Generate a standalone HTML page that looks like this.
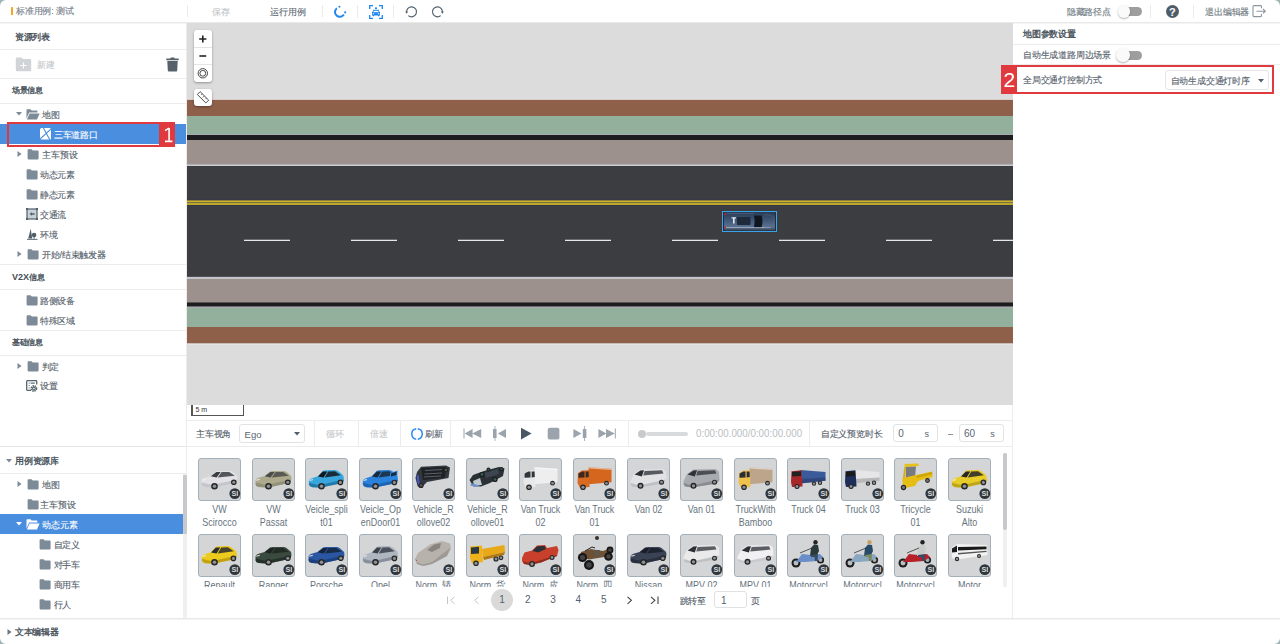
<!DOCTYPE html>
<html><head><meta charset="utf-8"><style>
html,body{margin:0;padding:0}
body{width:1280px;height:644px;position:relative;overflow:hidden;background:#fff;font-family:"Liberation Sans",sans-serif}
.t{position:absolute;white-space:nowrap;line-height:12px;font-size:9px}
</style></head><body>
<div style="position:absolute;left:0px;top:22px;width:1280px;height:1px;background:#e9e9e9"></div>
<div style="position:absolute;left:0px;top:23px;width:1280px;height:1px;background:#f4f4f4"></div>
<div style="position:absolute;left:186px;top:23px;width:1px;height:595px;background:#ececec"></div>
<div style="position:absolute;left:11px;top:7px;width:2.2px;height:8.3px;background:#f6a623;border-radius:0.5px"></div>
<div class="t" style="left:16.00px;top:5.1px;color:#75808a;font-size:9px;font-weight:normal;letter-spacing:-0.2px;-webkit-text-stroke:0.12px #75808a;">标准用例: 测试</div>
<div style="position:absolute;left:187px;top:5px;width:1px;height:12px;background:#ebebeb"></div>
<div class="t" style="left:212.30px;top:6.0px;color:#c4c6c8;font-size:9px;font-weight:normal;letter-spacing:-0.2px;-webkit-text-stroke:0.12px #c4c6c8;">保存</div>
<div class="t" style="left:270.30px;top:6.0px;color:#5e6973;font-size:9px;font-weight:normal;letter-spacing:-0.2px;-webkit-text-stroke:0.12px #5e6973;">运行用例</div>
<div style="position:absolute;left:322px;top:5px;width:1px;height:12px;background:#ebebeb"></div>
<svg style="position:absolute;left:332px;top:4px" width="16" height="16" viewBox="0 0 16 16">
<path d="M4.9 4.2 A4.8 4.8 0 1 0 11.9 10.5" fill="none" stroke="#1f87ef" stroke-width="2"/>
<circle cx="7.4" cy="2.7" r="1.05" fill="#1f87ef"/><circle cx="13.2" cy="8.4" r="1.05" fill="#1f87ef"/></svg>
<div style="position:absolute;left:357px;top:5px;width:1px;height:13px;background:#ebebeb"></div>
<svg style="position:absolute;left:368.5px;top:4.5px" width="14" height="14" viewBox="0 0 14 14">
<path d="M0.7 4 V0.7 H4 M10 0.7 H13.3 V4 M13.3 10 V13.3 H10 M4 13.3 H0.7 V10" fill="none" stroke="#1f87ef" stroke-width="1.3"/>
<path d="M4.3 4.8 H9.7 L10.5 7 H11 V10.4 H10.2 V11.3 H8.9 V10.4 H5.1 V11.3 H3.8 V10.4 H3 V7 H3.5 Z" fill="#1f87ef"/>
<rect x="4.6" y="5.8" width="4.8" height="1.4" fill="#fff"/><rect x="3.8" y="8.2" width="1.3" height="1" fill="#fff"/><rect x="8.9" y="8.2" width="1.3" height="1" fill="#fff"/>
<path d="M6.3 2.3 H7.7 L8.1 4 H5.9 Z" fill="#1f87ef"/></svg>
<div style="position:absolute;left:393px;top:5px;width:1px;height:13px;background:#ebebeb"></div>
<svg style="position:absolute;left:404px;top:4px" width="15" height="15" viewBox="0 0 15 15">
<path d="M2.6 8.6 A5 5 0 1 1 4.3 11.6" fill="none" stroke="#50606c" stroke-width="1.2"/>
<path d="M1.2 7.4 L4 7.4 L2.6 9.8 Z" fill="#50606c"/></svg>
<svg style="position:absolute;left:430px;top:4px" width="15" height="15" viewBox="0 0 15 15">
<path d="M12.4 8.6 A5 5 0 1 0 10.7 11.6" fill="none" stroke="#50606c" stroke-width="1.2"/>
<path d="M13.8 7.4 L11 7.4 L12.4 9.8 Z" fill="#50606c"/></svg>
<div class="t" style="left:1066.80px;top:6.0px;color:#6d7880;font-size:9px;font-weight:normal;letter-spacing:-0.2px;-webkit-text-stroke:0.12px #6d7880;">隐藏路径点</div>
<div style="position:absolute;left:1119px;top:7px;width:23px;height:9px;background:#9e9e9e;border-radius:5px"></div>
<div style="position:absolute;left:1117.5px;top:5.3px;width:12.5px;height:12.5px;background:#fafafa;border-radius:50%;box-shadow:0 1px 2px rgba(0,0,0,.3)"></div>
<div style="position:absolute;left:1150px;top:5px;width:1px;height:13px;background:#ebebeb"></div>
<div style="position:absolute;left:1165.5px;top:4.5px;width:13.5px;height:13.5px;border-radius:50%;background:#4e5d6a;color:#fff;font:bold 11px/14px 'Liberation Sans',sans-serif;text-align:center">?</div>
<div style="position:absolute;left:1193px;top:5px;width:1px;height:13px;background:#ebebeb"></div>
<div class="t" style="left:1205.30px;top:6.0px;color:#6d7880;font-size:9px;font-weight:normal;letter-spacing:-0.2px;-webkit-text-stroke:0.12px #6d7880;">退出编辑器</div>
<svg style="position:absolute;left:1252px;top:5px" width="15" height="13" viewBox="0 0 15 13">
<path d="M9.5 3.2 V1.5 A1 1 0 0 0 8.5 0.6 H2 A1 1 0 0 0 1 1.6 V10.6 A1 1 0 0 0 2 11.6 H8.5 A1 1 0 0 0 9.5 10.6 V9" fill="none" stroke="#8a96a0" stroke-width="1.1"/>
<path d="M4.5 6.2 H13.2 M11 4 L13.3 6.2 L11 8.4" fill="none" stroke="#8a96a0" stroke-width="1.1"/></svg>
<div class="t" style="left:14.80px;top:31.0px;color:#454f58;font-size:9px;font-weight:normal;letter-spacing:-0.2px;-webkit-text-stroke:0.32px #454f58;">资源列表</div>
<div style="position:absolute;left:0px;top:49px;width:186px;height:1px;background:#ececec"></div>
<svg style="position:absolute;left:15px;top:57px" width="17" height="15" viewBox="0 0 17 15">
<path d="M1.5 0.5 H6.5 L8 2 H15 A1.2 1.2 0 0 1 16.2 3.2 V13 A1.2 1.2 0 0 1 15 14.2 H2 A1.2 1.2 0 0 1 0.8 13 V1.2 Z" fill="#d0d4d7"/>
<path d="M8.5 5.5 V11.5 M5.5 8.5 H11.5" stroke="#fff" stroke-width="1"/></svg>
<div class="t" style="left:36.90px;top:58.900000000000006px;color:#c4c8cb;font-size:9px;font-weight:normal;letter-spacing:-0.2px;-webkit-text-stroke:0.12px #c4c8cb;">新建</div>
<svg style="position:absolute;left:166px;top:57px" width="13" height="15" viewBox="0 0 13 15">
<path d="M0.3 1.6 H4.2 L4.8 0.4 H8.2 L8.8 1.6 H12.7 V3.2 H0.3 Z" fill="#56626b"/>
<path d="M1.3 4 H11.7 L11.2 13.6 A1 1 0 0 1 10.2 14.5 H2.8 A1 1 0 0 1 1.8 13.6 Z" fill="#56626b"/></svg>
<div style="position:absolute;left:0px;top:78px;width:186px;height:1px;background:#ececec"></div>
<div class="t" style="left:11.90px;top:85.3px;color:#454f58;font-size:8px;font-weight:normal;letter-spacing:-0.2px;-webkit-text-stroke:0.32px #454f58;">场景信息</div>
<div style="position:absolute;left:0px;top:103px;width:186px;height:1px;background:#ececec"></div>
<svg style="position:absolute;left:15.8px;top:111.5px" width="6" height="4" viewBox="0 0 6 4"><path d="M0 0 L6 0 L3 3.6Z" fill="#7c8b97"/></svg>
<svg style="position:absolute;left:26px;top:108.5px" width="14" height="11" viewBox="0 0 14 11">
<path d="M0.5 1 A0.8 0.8 0 0 1 1.3 0.2 H4.5 L5.6 1.4 H10.6 A0.8 0.8 0 0 1 11.4 2.2 V3.6 H3.2 L0.5 9.5 Z" fill="#7c8b97"/>
<path d="M3.6 4.4 H13.6 L11 10.4 H0.9 Z" fill="#7c8b97"/></svg>
<div class="t" style="left:41.90px;top:108.7px;color:#55616b;font-size:9px;font-weight:normal;letter-spacing:-0.2px;-webkit-text-stroke:0.12px #55616b;">地图</div>
<div style="position:absolute;left:0px;top:123.5px;width:186px;height:20.5px;background:#4a8ee0"></div>
<svg style="position:absolute;left:39.8px;top:128px" width="11.5" height="11.5" viewBox="0 0 11.5 11.5">
<rect x="0" y="0" width="11.3" height="11.4" rx="1.6" fill="#fff"/>
<path d="M3.2 -0.5 L9.9 12 M11.4 0.6 L0.2 10.8" stroke="#4a8ee0" stroke-width="1.1"/></svg>
<div class="t" style="left:53.90px;top:128.7px;color:#ffffff;font-size:9px;font-weight:normal;letter-spacing:-0.2px;-webkit-text-stroke:0.12px #ffffff;">三车道路口</div>
<div style="position:absolute;left:7px;top:122px;width:167.5px;height:24.5px;border:2px solid #e0393e;box-sizing:border-box"></div>
<div style="position:absolute;left:158.5px;top:122px;width:16px;height:24.5px;background:#e0393e"></div>
<svg style="position:absolute;left:158.5px;top:122px" width="16" height="25" viewBox="0 0 16 25"><path d="M10.1 6 V19.3 M6 8.6 L10.1 6.1 M6 19.4 H13.4" fill="none" stroke="#fff" stroke-width="1.6"/></svg>
<svg style="position:absolute;left:16.5px;top:151px" width="5" height="6" viewBox="0 0 5 6"><path d="M0.5 0 L4.5 3 L0.5 6Z" fill="#7c8b97"/></svg>
<svg style="position:absolute;left:27px;top:149px" width="12" height="11" viewBox="0 0 12 11">
<path d="M0.6 1 A0.8 0.8 0 0 1 1.4 0.2 H4.6 L5.8 1.6 H10.8 A0.8 0.8 0 0 1 11.6 2.4 V9.6 A0.8 0.8 0 0 1 10.8 10.4 H1.4 A0.8 0.8 0 0 1 0.6 9.6 Z" fill="#7c8b97"/></svg>
<div class="t" style="left:42.20px;top:148.7px;color:#55616b;font-size:9px;font-weight:normal;letter-spacing:-0.2px;-webkit-text-stroke:0.12px #55616b;">主车预设</div>
<svg style="position:absolute;left:26px;top:169px" width="12" height="11" viewBox="0 0 12 11">
<path d="M0.6 1 A0.8 0.8 0 0 1 1.4 0.2 H4.6 L5.8 1.6 H10.8 A0.8 0.8 0 0 1 11.6 2.4 V9.6 A0.8 0.8 0 0 1 10.8 10.4 H1.4 A0.8 0.8 0 0 1 0.6 9.6 Z" fill="#7c8b97"/></svg>
<div class="t" style="left:39.90px;top:168.7px;color:#55616b;font-size:9px;font-weight:normal;letter-spacing:-0.2px;-webkit-text-stroke:0.12px #55616b;">动态元素</div>
<svg style="position:absolute;left:26px;top:189px" width="12" height="11" viewBox="0 0 12 11">
<path d="M0.6 1 A0.8 0.8 0 0 1 1.4 0.2 H4.6 L5.8 1.6 H10.8 A0.8 0.8 0 0 1 11.6 2.4 V9.6 A0.8 0.8 0 0 1 10.8 10.4 H1.4 A0.8 0.8 0 0 1 0.6 9.6 Z" fill="#7c8b97"/></svg>
<div class="t" style="left:39.90px;top:188.7px;color:#55616b;font-size:9px;font-weight:normal;letter-spacing:-0.2px;-webkit-text-stroke:0.12px #55616b;">静态元素</div>
<svg style="position:absolute;left:26px;top:208px" width="12" height="12" viewBox="0 0 12 12">
<rect x="1" y="1" width="10" height="10" fill="#c9d1d7" stroke="#4f5f6b" stroke-width="1.2"/>
<rect x="0" y="0" width="2" height="2" fill="#4f5f6b"/><rect x="10" y="0" width="2" height="2" fill="#4f5f6b"/><rect x="0" y="10" width="2" height="2" fill="#4f5f6b"/><rect x="10" y="10" width="2" height="2" fill="#4f5f6b"/>
<path d="M3.5 6 L6 4.2 V5.3 H8.6 V6.7 H6 V7.8 Z" fill="#4f5f6b"/></svg>
<div class="t" style="left:39.90px;top:208.7px;color:#55616b;font-size:9px;font-weight:normal;letter-spacing:-0.2px;-webkit-text-stroke:0.12px #55616b;">交通流</div>
<svg style="position:absolute;left:26px;top:228px" width="12" height="12" viewBox="0 0 12 12">
<path d="M4.7 0.8 L6.3 10.6 H2.2 Z" fill="#4f5f6b"/><circle cx="8.1" cy="7" r="2.3" fill="#4f5f6b"/>
<path d="M8.1 8 V10.8" stroke="#4f5f6b" stroke-width="1"/><path d="M1 11.4 H11.5" stroke="#4f5f6b" stroke-width="0.9"/></svg>
<div class="t" style="left:39.90px;top:228.7px;color:#55616b;font-size:9px;font-weight:normal;letter-spacing:-0.2px;-webkit-text-stroke:0.12px #55616b;">环境</div>
<svg style="position:absolute;left:16.5px;top:251px" width="5" height="6" viewBox="0 0 5 6"><path d="M0.5 0 L4.5 3 L0.5 6Z" fill="#7c8b97"/></svg>
<svg style="position:absolute;left:27px;top:249px" width="12" height="11" viewBox="0 0 12 11">
<path d="M0.6 1 A0.8 0.8 0 0 1 1.4 0.2 H4.6 L5.8 1.6 H10.8 A0.8 0.8 0 0 1 11.6 2.4 V9.6 A0.8 0.8 0 0 1 10.8 10.4 H1.4 A0.8 0.8 0 0 1 0.6 9.6 Z" fill="#7c8b97"/></svg>
<div class="t" style="left:41.90px;top:248.7px;color:#55616b;font-size:9px;font-weight:normal;letter-spacing:-0.2px;-webkit-text-stroke:0.12px #55616b;">开始/结束触发器</div>
<div style="position:absolute;left:0px;top:263.5px;width:186px;height:1px;background:#ececec"></div>
<div class="t" style="left:11.90px;top:271.2px;color:#454f58;font-size:8px;font-weight:normal;letter-spacing:-0.2px;-webkit-text-stroke:0.32px #454f58;"><span style="font-size:9px;letter-spacing:0;font-weight:bold;-webkit-text-stroke:0">V2X</span>信息</div>
<div style="position:absolute;left:0px;top:289px;width:186px;height:1px;background:#ececec"></div>
<svg style="position:absolute;left:26px;top:295px" width="12" height="11" viewBox="0 0 12 11">
<path d="M0.6 1 A0.8 0.8 0 0 1 1.4 0.2 H4.6 L5.8 1.6 H10.8 A0.8 0.8 0 0 1 11.6 2.4 V9.6 A0.8 0.8 0 0 1 10.8 10.4 H1.4 A0.8 0.8 0 0 1 0.6 9.6 Z" fill="#7c8b97"/></svg>
<div class="t" style="left:39.90px;top:294.7px;color:#55616b;font-size:9px;font-weight:normal;letter-spacing:-0.2px;-webkit-text-stroke:0.12px #55616b;">路侧设备</div>
<svg style="position:absolute;left:26px;top:315px" width="12" height="11" viewBox="0 0 12 11">
<path d="M0.6 1 A0.8 0.8 0 0 1 1.4 0.2 H4.6 L5.8 1.6 H10.8 A0.8 0.8 0 0 1 11.6 2.4 V9.6 A0.8 0.8 0 0 1 10.8 10.4 H1.4 A0.8 0.8 0 0 1 0.6 9.6 Z" fill="#7c8b97"/></svg>
<div class="t" style="left:39.90px;top:314.7px;color:#55616b;font-size:9px;font-weight:normal;letter-spacing:-0.2px;-webkit-text-stroke:0.12px #55616b;">特殊区域</div>
<div style="position:absolute;left:0px;top:330px;width:186px;height:1px;background:#ececec"></div>
<div class="t" style="left:11.90px;top:336.8px;color:#454f58;font-size:8px;font-weight:normal;letter-spacing:-0.2px;-webkit-text-stroke:0.32px #454f58;">基础信息</div>
<div style="position:absolute;left:0px;top:355px;width:186px;height:1px;background:#ececec"></div>
<svg style="position:absolute;left:17px;top:363px" width="5" height="6" viewBox="0 0 5 6"><path d="M0.5 0 L4.5 3 L0.5 6Z" fill="#7c8b97"/></svg>
<svg style="position:absolute;left:27px;top:361px" width="12" height="11" viewBox="0 0 12 11">
<path d="M0.6 1 A0.8 0.8 0 0 1 1.4 0.2 H4.6 L5.8 1.6 H10.8 A0.8 0.8 0 0 1 11.6 2.4 V9.6 A0.8 0.8 0 0 1 10.8 10.4 H1.4 A0.8 0.8 0 0 1 0.6 9.6 Z" fill="#7c8b97"/></svg>
<div class="t" style="left:41.60px;top:360.7px;color:#55616b;font-size:9px;font-weight:normal;letter-spacing:-0.2px;-webkit-text-stroke:0.12px #55616b;">判定</div>
<svg style="position:absolute;left:26px;top:379.5px" width="12" height="12" viewBox="0 0 12 12">
<path d="M5 10.3 H1.3 A0.6 0.6 0 0 1 0.7 9.7 V1.3 A0.6 0.6 0 0 1 1.3 0.7 H10.1 A0.6 0.6 0 0 1 10.7 1.3 V4.5" fill="none" stroke="#56666f" stroke-width="1.3"/>
<rect x="2.7" y="2.6" width="1" height="1" fill="#56666f"/><rect x="2.7" y="5" width="1" height="1" fill="#56666f"/><rect x="2.7" y="7.4" width="1" height="1" fill="#56666f"/>
<rect x="4.6" y="2.5" width="4.2" height="1.2" fill="#56666f"/>
<circle cx="7.9" cy="8.5" r="2.6" fill="none" stroke="#56666f" stroke-width="1.6" stroke-dasharray="1.4 0.7"/><circle cx="7.9" cy="8.5" r="1.9" fill="#56666f"/><circle cx="7.9" cy="8.5" r="0.8" fill="#fff"/></svg>
<div class="t" style="left:40.10px;top:380.2px;color:#55616b;font-size:9px;font-weight:normal;letter-spacing:-0.2px;-webkit-text-stroke:0.12px #55616b;">设置</div>
<div style="position:absolute;left:0px;top:446px;width:186px;height:1px;background:#e6e6e6"></div>
<svg style="position:absolute;left:6px;top:458.5px" width="6" height="4" viewBox="0 0 6 4"><path d="M0 0 L6 0 L3 3.6Z" fill="#7c8b97"/></svg>
<div class="t" style="left:15.00px;top:455.2px;color:#454f58;font-size:9px;font-weight:normal;letter-spacing:-0.2px;-webkit-text-stroke:0.32px #454f58;">用例资源库</div>
<div style="position:absolute;left:0px;top:473px;width:186px;height:1px;background:#ececec"></div>
<div style="position:absolute;left:182.8px;top:474px;width:3.8px;height:144px;background:#efefef"></div>
<div style="position:absolute;left:182.8px;top:474.5px;width:3.8px;height:59.5px;background:#c8c9ca;border-radius:1px"></div>
<svg style="position:absolute;left:16.6px;top:481px" width="5" height="6" viewBox="0 0 5 6"><path d="M0.5 0 L4.5 3 L0.5 6Z" fill="#7c8b97"/></svg>
<svg style="position:absolute;left:27px;top:479px" width="12" height="11" viewBox="0 0 12 11">
<path d="M0.6 1 A0.8 0.8 0 0 1 1.4 0.2 H4.6 L5.8 1.6 H10.8 A0.8 0.8 0 0 1 11.6 2.4 V9.6 A0.8 0.8 0 0 1 10.8 10.4 H1.4 A0.8 0.8 0 0 1 0.6 9.6 Z" fill="#7c8b97"/></svg>
<div class="t" style="left:42.30px;top:478.9px;color:#55616b;font-size:9px;font-weight:normal;letter-spacing:-0.2px;-webkit-text-stroke:0.12px #55616b;">地图</div>
<svg style="position:absolute;left:26.5px;top:499px" width="12" height="11" viewBox="0 0 12 11">
<path d="M0.6 1 A0.8 0.8 0 0 1 1.4 0.2 H4.6 L5.8 1.6 H10.8 A0.8 0.8 0 0 1 11.6 2.4 V9.6 A0.8 0.8 0 0 1 10.8 10.4 H1.4 A0.8 0.8 0 0 1 0.6 9.6 Z" fill="#7c8b97"/></svg>
<div class="t" style="left:40.40px;top:498.9px;color:#55616b;font-size:9px;font-weight:normal;letter-spacing:-0.2px;-webkit-text-stroke:0.12px #55616b;">主车预设</div>
<div style="position:absolute;left:0px;top:514px;width:182.5px;height:20px;background:#4a8ee0"></div>
<svg style="position:absolute;left:15.7px;top:522px" width="6" height="4" viewBox="0 0 6 4"><path d="M0 0 L6 0 L3 3.6Z" fill="#fff"/></svg>
<svg style="position:absolute;left:26px;top:519px" width="14" height="11" viewBox="0 0 14 11">
<path d="M0.5 1 A0.8 0.8 0 0 1 1.3 0.2 H4.5 L5.6 1.4 H10.6 A0.8 0.8 0 0 1 11.4 2.2 V3.6 H3.2 L0.5 9.5 Z" fill="#fff"/>
<path d="M3.6 4.4 H13.6 L11 10.4 H0.9 Z" fill="#fff"/></svg>
<div class="t" style="left:42.30px;top:518.9px;color:#fff;font-size:9px;font-weight:normal;letter-spacing:-0.2px;-webkit-text-stroke:0.12px #fff;">动态元素</div>
<svg style="position:absolute;left:39.3px;top:538.7px" width="12" height="11" viewBox="0 0 12 11">
<path d="M0.6 1 A0.8 0.8 0 0 1 1.4 0.2 H4.6 L5.8 1.6 H10.8 A0.8 0.8 0 0 1 11.6 2.4 V9.6 A0.8 0.8 0 0 1 10.8 10.4 H1.4 A0.8 0.8 0 0 1 0.6 9.6 Z" fill="#7c8b97"/></svg>
<div class="t" style="left:53.60px;top:539.2px;color:#55616b;font-size:9px;font-weight:normal;letter-spacing:-0.2px;-webkit-text-stroke:0.12px #55616b;">自定义</div>
<svg style="position:absolute;left:39.3px;top:558.7px" width="12" height="11" viewBox="0 0 12 11">
<path d="M0.6 1 A0.8 0.8 0 0 1 1.4 0.2 H4.6 L5.8 1.6 H10.8 A0.8 0.8 0 0 1 11.6 2.4 V9.6 A0.8 0.8 0 0 1 10.8 10.4 H1.4 A0.8 0.8 0 0 1 0.6 9.6 Z" fill="#7c8b97"/></svg>
<div class="t" style="left:53.60px;top:559.2px;color:#55616b;font-size:9px;font-weight:normal;letter-spacing:-0.2px;-webkit-text-stroke:0.12px #55616b;">对手车</div>
<svg style="position:absolute;left:39.3px;top:578.7px" width="12" height="11" viewBox="0 0 12 11">
<path d="M0.6 1 A0.8 0.8 0 0 1 1.4 0.2 H4.6 L5.8 1.6 H10.8 A0.8 0.8 0 0 1 11.6 2.4 V9.6 A0.8 0.8 0 0 1 10.8 10.4 H1.4 A0.8 0.8 0 0 1 0.6 9.6 Z" fill="#7c8b97"/></svg>
<div class="t" style="left:53.60px;top:579.2px;color:#55616b;font-size:9px;font-weight:normal;letter-spacing:-0.2px;-webkit-text-stroke:0.12px #55616b;">商用车</div>
<svg style="position:absolute;left:39.3px;top:598.7px" width="12" height="11" viewBox="0 0 12 11">
<path d="M0.6 1 A0.8 0.8 0 0 1 1.4 0.2 H4.6 L5.8 1.6 H10.8 A0.8 0.8 0 0 1 11.6 2.4 V9.6 A0.8 0.8 0 0 1 10.8 10.4 H1.4 A0.8 0.8 0 0 1 0.6 9.6 Z" fill="#7c8b97"/></svg>
<div class="t" style="left:53.60px;top:599.2px;color:#55616b;font-size:9px;font-weight:normal;letter-spacing:-0.2px;-webkit-text-stroke:0.12px #55616b;">行人</div>
<div style="position:absolute;left:0px;top:618px;width:1280px;height:1px;background:#e8e8e8"></div>
<div style="position:absolute;left:0px;top:619px;width:1280px;height:1px;background:#f4f4f4"></div>
<svg style="position:absolute;left:6.7px;top:628.8px" width="5" height="6" viewBox="0 0 5 6"><path d="M0.5 0 L4.5 3 L0.5 6Z" fill="#6a7680"/></svg>
<div class="t" style="left:14.90px;top:626.0px;color:#454f58;font-size:9px;font-weight:normal;letter-spacing:-0.2px;-webkit-text-stroke:0.32px #454f58;">文本编辑器</div>
<div style="position:absolute;left:187px;top:23px;width:825.7px;height:382px;background:#dcdcdc;overflow:hidden">
<div style="position:absolute;left:0;top:76px;width:826px;height:1px;background:#d8cfcb"></div>
<div style="position:absolute;left:0;top:77px;width:826px;height:16px;background:#8e604a"></div>
<div style="position:absolute;left:0;top:93px;width:826px;height:18px;background:#93b09c"></div>
<div style="position:absolute;left:0;top:111px;width:826px;height:1px;background:#a8acb0"></div>
<div style="position:absolute;left:0;top:112px;width:826px;height:5px;background:#1d1d1f"></div>
<div style="position:absolute;left:0;top:117px;width:826px;height:24px;background:#9c918c"></div>
<div style="position:absolute;left:0;top:141px;width:826px;height:1px;background:#b3b0b2"></div>
<div style="position:absolute;left:0;top:142px;width:826px;height:1px;background:#c9ccd2"></div>
<div style="position:absolute;left:0;top:143px;width:826px;height:111px;background:#3c3d41"></div>
<div style="position:absolute;left:0;top:176px;width:826px;height:1px;background:#363a48"></div>
<div style="position:absolute;left:0;top:177px;width:826px;height:1px;background:#8a7e3a"></div>
<div style="position:absolute;left:0;top:178px;width:826px;height:1px;background:#d2b524"></div>
<div style="position:absolute;left:0;top:179px;width:826px;height:1px;background:#77703f"></div>
<div style="position:absolute;left:0;top:180px;width:826px;height:2px;background:#bda82c"></div>
<div style="position:absolute;left:0;top:182px;width:826px;height:1px;background:#343848"></div>
<div style="position:absolute;left:0;top:253px;width:826px;height:1px;background:#505258"></div>
<div style="position:absolute;left:0;top:254px;width:826px;height:2px;background:#c3c5cb"></div>
<div style="position:absolute;left:0;top:256px;width:826px;height:23px;background:#9c918c"></div>
<div style="position:absolute;left:0;top:279px;width:826px;height:1px;background:#5a5453"></div>
<div style="position:absolute;left:0;top:280px;width:826px;height:3px;background:#1d1d1f"></div>
<div style="position:absolute;left:0;top:283px;width:826px;height:1px;background:#6a6c70"></div>
<div style="position:absolute;left:0;top:284px;width:826px;height:1px;background:#a8acb0"></div>
<div style="position:absolute;left:0;top:285px;width:826px;height:19px;background:#93b09c"></div>
<div style="position:absolute;left:0;top:304px;width:826px;height:16px;background:#8e604a"></div>
<div style="position:absolute;left:0;top:320px;width:826px;height:1px;background:#c8bcb6"></div>
<div style="position:absolute;left:0;top:321px;width:826px;height:1px;background:#e4e4e6"></div>
<div style="position:absolute;left:56.5px;top:217px;width:46.5px;height:1px;background:#e2e5e9"></div><div style="position:absolute;left:56.5px;top:216px;width:46.5px;height:1px;background:#6a6c72"></div>
<div style="position:absolute;left:163.5px;top:217px;width:46.5px;height:1px;background:#e2e5e9"></div><div style="position:absolute;left:163.5px;top:216px;width:46.5px;height:1px;background:#6a6c72"></div>
<div style="position:absolute;left:270.5px;top:217px;width:46.5px;height:1px;background:#e2e5e9"></div><div style="position:absolute;left:270.5px;top:216px;width:46.5px;height:1px;background:#6a6c72"></div>
<div style="position:absolute;left:377.5px;top:217px;width:46.5px;height:1px;background:#e2e5e9"></div><div style="position:absolute;left:377.5px;top:216px;width:46.5px;height:1px;background:#6a6c72"></div>
<div style="position:absolute;left:484.5px;top:217px;width:46.5px;height:1px;background:#e2e5e9"></div><div style="position:absolute;left:484.5px;top:216px;width:46.5px;height:1px;background:#6a6c72"></div>
<div style="position:absolute;left:591.5px;top:217px;width:46.5px;height:1px;background:#e2e5e9"></div><div style="position:absolute;left:591.5px;top:216px;width:46.5px;height:1px;background:#6a6c72"></div>
<div style="position:absolute;left:698.5px;top:217px;width:46.5px;height:1px;background:#e2e5e9"></div><div style="position:absolute;left:698.5px;top:216px;width:46.5px;height:1px;background:#6a6c72"></div>
<div style="position:absolute;left:805.5px;top:217px;width:46.5px;height:1px;background:#e2e5e9"></div><div style="position:absolute;left:805.5px;top:216px;width:46.5px;height:1px;background:#6a6c72"></div>
<div style="position:absolute;left:535.3px;top:187.8px;width:54.5px;height:21.5px;box-sizing:border-box;border:1.6px solid #3aa4ea;background:#232c38"></div>
<svg style="position:absolute;left:537px;top:189.4px" width="51" height="18.4" viewBox="0 0 51 18.4">
<defs><linearGradient id="cg" x1="0" y1="0" x2="0" y2="1"><stop offset="0" stop-color="#2a3a52"/><stop offset="0.35" stop-color="#3a5070"/><stop offset="0.8" stop-color="#5a7090"/><stop offset="1" stop-color="#3a4658"/></linearGradient></defs>
<rect x="0" y="0" width="51" height="18.4" rx="1.5" fill="url(#cg)"/>
<rect x="13" y="5" width="13.5" height="8" rx="0.6" fill="#1f2a3a"/>
<path d="M30 3.5 L37.5 3.5 Q39.5 9 37.5 15.5 L30 15.5 Q31.5 9.5 30 3.5 Z" fill="#0f1620"/>
<path d="M2 15.6 H47" stroke="#b8c4d0" stroke-width="0.9" opacity="0.8"/><path d="M3 1.6 H30" stroke="#8090a4" stroke-width="0.7" opacity="0.5"/>
<path d="M40 2.5 Q48 2.5 50 6 L50 13 Q48 16 40 16" fill="none" stroke="#5a6e88" stroke-width="0.8" opacity="0.6"/>
<path d="M7.6 5.2 H12 V6.6 H10.6 V11.4 H9 V6.6 H7.6 Z" fill="#e6ebf0"/>
<rect x="0.3" y="1.3" width="1.6" height="1.8" fill="#d02626"/><rect x="0.3" y="14.6" width="1.6" height="1.8" fill="#d02626"/></svg>
<div style="position:absolute;left:7px;top:7px;width:17.5px;height:52px;background:#fff;border-radius:3px;box-shadow:0 1px 2.5px rgba(0,0,0,.35)"></div>
<div style="position:absolute;left:7px;top:24.299999999999997px;width:17.5px;height:1px;background:#e4e4e4"></div>
<div style="position:absolute;left:7px;top:41px;width:17.5px;height:1px;background:#e4e4e4"></div>
<svg style="position:absolute;left:7px;top:7px" width="18" height="52" viewBox="0 0 18 52">
<path d="M5.2 9 H12.4 M8.8 5.4 V12.6" stroke="#222" stroke-width="1.6"/>
<path d="M5.4 26 H12.2" stroke="#222" stroke-width="1.6"/>
<circle cx="8.8" cy="43.3" r="4.7" fill="none" stroke="#333" stroke-width="0.9"/>
<circle cx="8.8" cy="43.3" r="2.9" fill="none" stroke="#333" stroke-width="0.9"/></svg>
<div style="position:absolute;left:7px;top:66px;width:17.5px;height:16.5px;background:#fff;border-radius:3px;box-shadow:0 1px 2.5px rgba(0,0,0,.35)"></div>
<svg style="position:absolute;left:7px;top:66px" width="18" height="17" viewBox="0 0 18 17">
<g transform="rotate(45 9 8.3)"><rect x="3" y="6.3" width="12" height="4" fill="none" stroke="#444" stroke-width="0.9"/>
<path d="M6 6.3 V8 M9 6.3 V8.5 M12 6.3 V8" stroke="#444" stroke-width="0.7"/></g></svg>
</div>
<div style="position:absolute;left:187px;top:405px;width:825px;height:15px;background:#fff"></div>
<div style="position:absolute;left:191.3px;top:405px;width:1.3px;height:11px;background:#555"></div>
<div style="position:absolute;left:243px;top:405px;width:1.3px;height:11px;background:#555"></div>
<div style="position:absolute;left:191.3px;top:415px;width:53px;height:1.3px;background:#555"></div>
<div class="t" style="left:195.5px;top:405px;font-size:7px;line-height:10px;color:#333">5 m</div>
<div style="position:absolute;left:187px;top:420px;width:825px;height:1px;background:#ececec"></div>
<div style="position:absolute;left:187px;top:446px;width:825px;height:1px;background:#ececec"></div>
<div class="t" style="left:196.10px;top:427.5px;color:#55616b;font-size:9px;font-weight:normal;letter-spacing:-0.2px;-webkit-text-stroke:0.12px #55616b;">主车视角</div>
<div style="position:absolute;left:238.5px;top:424.4px;width:66.3px;height:18.2px;border:1px solid #e1e3e5;border-radius:3px;box-sizing:border-box;background:#fff"></div>
<div class="t" style="left:244.6px;top:428.6px;font-size:9.5px;line-height:12px;color:#5b6670">Ego</div>
<svg style="position:absolute;left:293.5px;top:431.8px" width="6" height="4" viewBox="0 0 6 4"><path d="M0 0 L6 0 L3 3.6Z" fill="#555f68"/></svg>
<div style="position:absolute;left:313.5px;top:420px;width:1px;height:26px;background:#ececec"></div>
<div style="position:absolute;left:357.5px;top:420px;width:1px;height:26px;background:#ececec"></div>
<div style="position:absolute;left:400.4px;top:420px;width:1px;height:26px;background:#ececec"></div>
<div style="position:absolute;left:450.2px;top:420px;width:1px;height:26px;background:#ececec"></div>
<div style="position:absolute;left:628.4px;top:420px;width:1px;height:26px;background:#ececec"></div>
<div style="position:absolute;left:809.4px;top:420px;width:1px;height:26px;background:#ececec"></div>
<div class="t" style="left:326.30px;top:428.0px;color:#c6c9cc;font-size:9px;font-weight:normal;letter-spacing:-0.2px;-webkit-text-stroke:0.12px #c6c9cc;">循环</div>
<div class="t" style="left:369.90px;top:428.0px;color:#c6c9cc;font-size:9px;font-weight:normal;letter-spacing:-0.2px;-webkit-text-stroke:0.12px #c6c9cc;">倍速</div>
<svg style="position:absolute;left:410px;top:426.6px" width="14" height="14" viewBox="0 0 14 14">
<path d="M7.75 1.85 A5.2 5.2 0 0 1 7.75 12.15 M6.25 12.15 A5.2 5.2 0 0 1 6.25 1.85" fill="none" stroke="#2a8cf0" stroke-width="1.5"/></svg>
<div class="t" style="left:425.30px;top:428.0px;color:#55616b;font-size:9px;font-weight:normal;letter-spacing:-0.2px;-webkit-text-stroke:0.12px #55616b;">刷新</div>
<svg style="position:absolute;left:462px;top:425px" width="160" height="18" viewBox="0 0 160 18">
<path d="M2 3.5 V13.5" stroke="#9ba4ac" stroke-width="1"/>
<path d="M2.6 8.5 L10.6 4 V13 Z M10.2 8.5 L19.2 4 V13 Z" fill="#9ba4ac"/>
<path d="M33 1 V16" stroke="#9ba4ac" stroke-width="0.8"/><rect x="31" y="4" width="3.6" height="9" fill="#9ba4ac"/>
<path d="M35.8 8.5 L44 4 V13 Z" fill="#9ba4ac"/>
<path d="M59 2.7 L69.6 8.5 L59 14.5 Z" fill="#4a5865"/>
<rect x="85.7" y="2.7" width="11.7" height="11.9" rx="2" fill="#9ba4ac"/>
<path d="M111.4 4 L119.4 8.5 L111.4 13 Z" fill="#9ba4ac"/>
<path d="M122.5 1 V16" stroke="#9ba4ac" stroke-width="0.8"/><rect x="120.8" y="4" width="3.6" height="9" fill="#9ba4ac"/>
<path d="M136.4 4 L144.4 8.5 L136.4 13 Z M144 4 L152.8 8.5 L144 13 Z" fill="#9ba4ac"/>
<path d="M153.3 3.5 V13.5" stroke="#9ba4ac" stroke-width="1"/></svg>
<div style="position:absolute;left:637.8px;top:429.7px;width:8.3px;height:8.3px;background:#c9cacc;border-radius:50%"></div>
<div style="position:absolute;left:646px;top:431.8px;width:41.5px;height:4px;background:#d9dadc;border-radius:2px"></div>
<div class="t" style="left:695.6px;top:427px;font-size:11px;line-height:12px;color:#b9bec2;transform:scaleX(0.89);transform-origin:0 0">0:00:00.000/0:00:00.000</div>
<div class="t" style="left:820.80px;top:428.2px;color:#55616b;font-size:9px;font-weight:normal;letter-spacing:-0.2px;-webkit-text-stroke:0.12px #55616b;">自定义预览时长</div>
<div style="position:absolute;left:893.3px;top:424.2px;width:45px;height:18.1px;border:1px solid #e1e3e5;border-radius:3px;box-sizing:border-box"></div>
<div class="t" style="left:898.3px;top:427.5px;font-size:10px;line-height:12px;color:#5b6670">0</div>
<div class="t" style="left:924.5px;top:428px;font-size:9px;line-height:12px;color:#5b6670">s</div>
<div style="position:absolute;left:948px;top:433.6px;width:4.6px;height:0.9px;background:#8a949c"></div>
<div style="position:absolute;left:959px;top:424.2px;width:44.6px;height:18.1px;border:1px solid #e1e3e5;border-radius:3px;box-sizing:border-box"></div>
<div class="t" style="left:964px;top:427.5px;font-size:10px;line-height:12px;color:#5b6670">60</div>
<div class="t" style="left:990.3px;top:428px;font-size:9px;line-height:12px;color:#5b6670">s</div>
<div style="position:absolute;left:1012px;top:405px;width:1px;height:213px;background:#ececec"></div>
<div class="t" style="left:1023.05px;top:27.799999999999997px;color:#454f58;font-size:9px;font-weight:normal;letter-spacing:-0.2px;-webkit-text-stroke:0.32px #454f58;">地图参数设置</div>
<div style="position:absolute;left:1013px;top:44px;width:267px;height:1px;background:#ececec"></div>
<div class="t" style="left:1023.05px;top:48.8px;color:#55616b;font-size:9px;font-weight:normal;letter-spacing:-0.2px;-webkit-text-stroke:0.12px #55616b;">自动生成道路周边场景</div>
<div style="position:absolute;left:1117.5px;top:50.5px;width:24px;height:9px;background:#9e9e9e;border-radius:5px"></div>
<div style="position:absolute;left:1116px;top:48.2px;width:13.5px;height:13.5px;background:#fafafa;border-radius:50%;box-shadow:0 1px 2px rgba(0,0,0,.3)"></div>
<div style="position:absolute;left:1013px;top:64.3px;width:267px;height:1px;background:#ececec"></div>
<div style="position:absolute;left:1001.25px;top:65px;width:272.7px;height:29px;border:2px solid #e0393e;box-sizing:border-box"></div>
<div style="position:absolute;left:1001.6px;top:65px;width:15.6px;height:29px;background:#e0393e"></div>
<div style="position:absolute;left:1001.25px;top:65px;width:16px;height:29px;color:#fff;font:21px/29px 'Liberation Sans',sans-serif;text-align:center">2</div>
<div class="t" style="left:1023.05px;top:74.0px;color:#55616b;font-size:9px;font-weight:normal;letter-spacing:-0.2px;-webkit-text-stroke:0.12px #55616b;">全局交通灯控制方式</div>
<div style="position:absolute;left:1165.2px;top:70.2px;width:103.6px;height:19.8px;border:1px solid #e4e6e8;border-radius:3px;box-sizing:border-box"></div>
<div class="t" style="left:1170.60px;top:74.6px;color:#55616b;font-size:9px;font-weight:normal;letter-spacing:-0.2px;-webkit-text-stroke:0.12px #55616b;">自动生成交通灯时序</div>
<svg style="position:absolute;left:1257.6px;top:79px" width="6" height="4" viewBox="0 0 6 4"><path d="M0 0 L6 0 L3 3.6Z" fill="#555f68"/></svg>
<svg style="position:absolute;left:0;top:0" width="6" height="6"><path d="M0 0 H6 A6 6 0 0 0 0 6 Z" fill="#9fb4b4"/></svg>
<svg style="position:absolute;left:1274px;top:0" width="6" height="6"><path d="M0 0 H6 V6 A6 6 0 0 0 0 0 Z" fill="#9fb4b4"/></svg>
<svg style="position:absolute;left:0;top:638px" width="6" height="6"><path d="M0 0 A6 6 0 0 0 6 6 H0 Z" fill="#9fb4b4"/></svg>
<svg style="position:absolute;left:1274px;top:638px" width="6" height="6"><path d="M6 0 V6 H0 A6 6 0 0 0 6 0 Z" fill="#9fb4b4"/></svg>
<div style="position:absolute;left:187px;top:447px;width:816px;height:139.5px;overflow:hidden">
<div style="position:absolute;left:11.00px;top:11px;width:43px;height:43px;box-sizing:border-box;border:1px solid #a3b0b9;border-radius:3px;background:#d3d5d6"></div>
<svg style="position:absolute;left:11.00px;top:11px" width="43" height="43" viewBox="0 0 43 43"><path d="M3.5 22.5 Q4 20.5 6.5 19.8 L12.5 18 L18 13.6 Q19 13 21 13 L31.5 13 Q33 13 34.5 14 L38.6 17.5 Q39.5 18.5 39.4 20.5 L39 23 Q38.5 24.6 37 25 L21 28.4 Q18 29.2 14 29.5 L7 29 Q4 28.5 3.6 26.5 Z" fill="#e2e2e6"/><path d="M3.8 24.5 L14 27 L39.2 21.5 L39 23 Q38.5 24.6 37 25 L21 28.4 Q18 29.2 14 29.5 L7 29 Q4 28.5 3.6 26.5Z" fill="#b8bcc2" opacity="0.75"/><path d="M12.8 18.3 L18.4 14 L22.6 14 L18.6 19.5 Z" fill="#3a3e44"/><path d="M19.8 19.4 L23.6 14.1 L31.2 14.1 L36.8 17.7 Z" fill="#3a3e44" opacity="0.85"/><path d="M4.4 21.6 L8 20.8 L7.6 22 L4.2 22.8Z" fill="#f4f4f4" opacity="0.8"/><circle cx="16.5" cy="28.2" r="3.3" fill="#262626"/><circle cx="16.5" cy="28.2" r="1.81" fill="#8e9296"/><circle cx="35.8" cy="24.2" r="2.8" fill="#262626"/><circle cx="35.8" cy="24.2" r="1.54" fill="#8e9296"/><circle cx="36.8" cy="35.6" r="5.4" fill="#30363b"/><text x="36.8" y="38.3" text-anchor="middle" font-family="Liberation Sans" font-weight="bold" font-size="7.2" fill="#d8dadc">SI</text></svg>
<div style="position:absolute;left:3.00px;top:56.4px;width:59px;text-align:center;font-size:10.6px;line-height:12.6px;color:#67747e;white-space:nowrap;transform:scaleX(0.845);transform-origin:50% 0">VW<br>Scirocco</div>
<div style="position:absolute;left:64.57px;top:11px;width:43px;height:43px;box-sizing:border-box;border:1px solid #a3b0b9;border-radius:3px;background:#d3d5d6"></div>
<svg style="position:absolute;left:64.57px;top:11px" width="43" height="43" viewBox="0 0 43 43"><path d="M3.5 22.5 Q4 20.5 6.5 19.8 L12.5 18 L18 13.6 Q19 13 21 13 L31.5 13 Q33 13 34.5 14 L38.6 17.5 Q39.5 18.5 39.4 20.5 L39 23 Q38.5 24.6 37 25 L21 28.4 Q18 29.2 14 29.5 L7 29 Q4 28.5 3.6 26.5 Z" fill="#aca98c"/><path d="M3.8 24.5 L14 27 L39.2 21.5 L39 23 Q38.5 24.6 37 25 L21 28.4 Q18 29.2 14 29.5 L7 29 Q4 28.5 3.6 26.5Z" fill="#8a8870" opacity="0.75"/><path d="M12.8 18.3 L18.4 14 L22.6 14 L18.6 19.5 Z" fill="#4a4c4a"/><path d="M19.8 19.4 L23.6 14.1 L31.2 14.1 L36.8 17.7 Z" fill="#4a4c4a" opacity="0.85"/><path d="M4.4 21.6 L8 20.8 L7.6 22 L4.2 22.8Z" fill="#f4f4f4" opacity="0.8"/><circle cx="16.5" cy="28.2" r="3.3" fill="#262626"/><circle cx="16.5" cy="28.2" r="1.81" fill="#8e9296"/><circle cx="35.8" cy="24.2" r="2.8" fill="#262626"/><circle cx="35.8" cy="24.2" r="1.54" fill="#8e9296"/><circle cx="36.8" cy="35.6" r="5.4" fill="#30363b"/><text x="36.8" y="38.3" text-anchor="middle" font-family="Liberation Sans" font-weight="bold" font-size="7.2" fill="#d8dadc">SI</text></svg>
<div style="position:absolute;left:56.57px;top:56.4px;width:59px;text-align:center;font-size:10.6px;line-height:12.6px;color:#67747e;white-space:nowrap;transform:scaleX(0.845);transform-origin:50% 0">VW<br>Passat</div>
<div style="position:absolute;left:118.14px;top:11px;width:43px;height:43px;box-sizing:border-box;border:1px solid #a3b0b9;border-radius:3px;background:#d3d5d6"></div>
<svg style="position:absolute;left:118.14px;top:11px" width="43" height="43" viewBox="0 0 43 43"><path d="M3.8 23 Q4.2 21 6.8 20.2 L12.8 18.2 L17.6 13 Q18.6 12.2 20.5 12.2 L29.5 12 Q31.5 12 33 13 L37.4 16.4 Q38.8 17.6 38.8 20 L38.6 23 Q38.2 24.8 36.6 25.2 L21 28.6 Q18 29.4 14 29.6 L7.5 29.2 Q4.4 28.6 3.9 26.6 Z" fill="#3aa6de"/><path d="M4 24.8 L14 27.2 L38.7 21.6 L38.6 23 Q38.2 24.8 36.6 25.2 L21 28.6 Q18 29.4 14 29.6 L7.5 29.2 Q4.4 28.6 3.9 26.6Z" fill="#1e6a9a" opacity="0.75"/><path d="M13 18.4 L17.9 13.6 L22.2 13.4 L18.6 19.5 Z" fill="#151617"/><path d="M19.8 19.4 L23.2 13.4 L30 13.2 L35.8 17.2 Z" fill="#151617" opacity="0.85"/><path d="M4.6 21.8 L8.2 21 L7.8 22.2 L4.4 23Z" fill="#f4f4f4" opacity="0.8"/><circle cx="16.5" cy="28.3" r="3.3" fill="#262626"/><circle cx="16.5" cy="28.3" r="1.81" fill="#8e9296"/><circle cx="35.4" cy="24.4" r="2.8" fill="#262626"/><circle cx="35.4" cy="24.4" r="1.54" fill="#8e9296"/><circle cx="36.8" cy="35.6" r="5.4" fill="#30363b"/><text x="36.8" y="38.3" text-anchor="middle" font-family="Liberation Sans" font-weight="bold" font-size="7.2" fill="#d8dadc">SI</text></svg>
<div style="position:absolute;left:110.14px;top:56.4px;width:59px;text-align:center;font-size:10.6px;line-height:12.6px;color:#67747e;white-space:nowrap;transform:scaleX(0.845);transform-origin:50% 0">Veicle_spli<br>t01</div>
<div style="position:absolute;left:171.71px;top:11px;width:43px;height:43px;box-sizing:border-box;border:1px solid #a3b0b9;border-radius:3px;background:#d3d5d6"></div>
<svg style="position:absolute;left:171.71px;top:11px" width="43" height="43" viewBox="0 0 43 43"><path d="M3.8 23 Q4.2 21 6.8 20.2 L12.8 18.2 L17.6 13 Q18.6 12.2 20.5 12.2 L29.5 12 Q31.5 12 33 13 L37.4 16.4 Q38.8 17.6 38.8 20 L38.6 23 Q38.2 24.8 36.6 25.2 L21 28.6 Q18 29.4 14 29.6 L7.5 29.2 Q4.4 28.6 3.9 26.6 Z" fill="#2a82dc"/><path d="M4 24.8 L14 27.2 L38.7 21.6 L38.6 23 Q38.2 24.8 36.6 25.2 L21 28.6 Q18 29.4 14 29.6 L7.5 29.2 Q4.4 28.6 3.9 26.6Z" fill="#1a5aa8" opacity="0.75"/><path d="M13 18.4 L17.9 13.6 L22.2 13.4 L18.6 19.5 Z" fill="#1a2a3a"/><path d="M19.8 19.4 L23.2 13.4 L30 13.2 L35.8 17.2 Z" fill="#1a2a3a" opacity="0.85"/><path d="M4.6 21.8 L8.2 21 L7.8 22.2 L4.4 23Z" fill="#f4f4f4" opacity="0.8"/><circle cx="16.5" cy="28.3" r="3.3" fill="#262626"/><circle cx="16.5" cy="28.3" r="1.81" fill="#8e9296"/><circle cx="35.4" cy="24.4" r="2.8" fill="#262626"/><circle cx="35.4" cy="24.4" r="1.54" fill="#8e9296"/><path d="M31 15 L38.5 12.5 L38 21 L31 23Z" fill="#2a86de"/><path d="M32 15.6 L37.5 13.8 L37.5 17 L32 18.5Z" fill="#1a2a3a"/><circle cx="36.8" cy="35.6" r="5.4" fill="#30363b"/><text x="36.8" y="38.3" text-anchor="middle" font-family="Liberation Sans" font-weight="bold" font-size="7.2" fill="#d8dadc">SI</text></svg>
<div style="position:absolute;left:163.71px;top:56.4px;width:59px;text-align:center;font-size:10.6px;line-height:12.6px;color:#67747e;white-space:nowrap;transform:scaleX(0.845);transform-origin:50% 0">Veicle_Op<br>enDoor01</div>
<div style="position:absolute;left:225.28px;top:11px;width:43px;height:43px;box-sizing:border-box;border:1px solid #a3b0b9;border-radius:3px;background:#d3d5d6"></div>
<svg style="position:absolute;left:225.28px;top:11px" width="43" height="43" viewBox="0 0 43 43"><path d="M5 14 L9 8.8 L34 7.6 L38 9.5 L36.5 20 L15 24 L9 30 L5.5 28 L3.5 20 Z" fill="#33383e"/><path d="M9 10 L34 9 L33 19.5 L11 22Z" fill="#1e2226"/><path d="M13 12.5 L30 11.5 M12.5 16 L30 15 M12 19 L29 18" stroke="#6a7078" stroke-width="0.8"/><path d="M4.5 18 L6 27 L8 27.5 L6.5 17Z" fill="#4a56c8"/><circle cx="9" cy="27.5" r="2.6" fill="#222"/><circle cx="9" cy="27.5" r="1.43" fill="#555"/><circle cx="34" cy="12" r="2.2" fill="#222"/><circle cx="34" cy="12" r="1.21" fill="#555"/><circle cx="36.8" cy="35.6" r="5.4" fill="#30363b"/><text x="36.8" y="38.3" text-anchor="middle" font-family="Liberation Sans" font-weight="bold" font-size="7.2" fill="#d8dadc">SI</text></svg>
<div style="position:absolute;left:217.28px;top:56.4px;width:59px;text-align:center;font-size:10.6px;line-height:12.6px;color:#67747e;white-space:nowrap;transform:scaleX(0.845);transform-origin:50% 0">Vehicle_R<br>ollove02</div>
<div style="position:absolute;left:278.85px;top:11px;width:43px;height:43px;box-sizing:border-box;border:1px solid #a3b0b9;border-radius:3px;background:#d3d5d6"></div>
<svg style="position:absolute;left:278.85px;top:11px" width="43" height="43" viewBox="0 0 43 43"><path d="M3.5 22 L7 17 L18 13 L33 9 L38.5 10.5 L37 18 L24 25 L15 28.5 L7 28 Z" fill="#2b3034"/><path d="M7 23 L14 20 L16 27 L8 27.5Z" fill="#bfc8cc"/><path d="M5 25 L14 27.8 L9 29 L4.5 27.5Z" fill="#6e8ec8"/><path d="M18 15 L32 11 L33 16 L20 20Z" fill="#3d4650"/><circle cx="16" cy="16.5" r="2.6" fill="#1a1a1a"/><circle cx="16" cy="16.5" r="1.43" fill="#3a5a60"/><circle cx="29" cy="21.5" r="2.6" fill="#1a1a1a"/><circle cx="29" cy="21.5" r="1.43" fill="#3a5a60"/><circle cx="35.5" cy="11" r="2" fill="#1a1a1a"/><circle cx="35.5" cy="11" r="1.10" fill="#3a5a60"/><circle cx="22.5" cy="11.5" r="2" fill="#1a1a1a"/><circle cx="22.5" cy="11.5" r="1.10" fill="#3a5a60"/><circle cx="36.8" cy="35.6" r="5.4" fill="#30363b"/><text x="36.8" y="38.3" text-anchor="middle" font-family="Liberation Sans" font-weight="bold" font-size="7.2" fill="#d8dadc">SI</text></svg>
<div style="position:absolute;left:270.85px;top:56.4px;width:59px;text-align:center;font-size:10.6px;line-height:12.6px;color:#67747e;white-space:nowrap;transform:scaleX(0.845);transform-origin:50% 0">Vehicle_R<br>ollove01</div>
<div style="position:absolute;left:332.42px;top:11px;width:43px;height:43px;box-sizing:border-box;border:1px solid #a3b0b9;border-radius:3px;background:#d3d5d6"></div>
<svg style="position:absolute;left:332.42px;top:11px" width="43" height="43" viewBox="0 0 43 43"><path d="M15.5 9.2 L38.5 10.8 L38.5 24.2 L15.5 26.2 Z" fill="#eeeeee"/><path d="M15.5 9.2 L38.5 10.8 L38.5 12 L15.5 10.5Z" fill="#fff" opacity="0.5"/><path d="M5 15 L9 12.5 L16 12.2 L16.5 29 L7 30 L4.5 25 Z" fill="#e8e8ea"/><path d="M5.6 15.6 L9.2 13.4 L11.5 13.4 L11.5 19.5 L5.5 19.8Z" fill="#30353a"/><path d="M12.6 13.6 L15.6 13.4 L15.8 19 L12.6 19.4Z" fill="#30353a"/><circle cx="10" cy="29.2" r="2.8" fill="#262626"/><circle cx="10" cy="29.2" r="1.54" fill="#8e9296"/><circle cx="33.5" cy="25.2" r="2.4" fill="#262626"/><circle cx="33.5" cy="25.2" r="1.32" fill="#8e9296"/><circle cx="36.8" cy="35.6" r="5.4" fill="#30363b"/><text x="36.8" y="38.3" text-anchor="middle" font-family="Liberation Sans" font-weight="bold" font-size="7.2" fill="#d8dadc">SI</text></svg>
<div style="position:absolute;left:324.42px;top:56.4px;width:59px;text-align:center;font-size:10.6px;line-height:12.6px;color:#67747e;white-space:nowrap;transform:scaleX(0.845);transform-origin:50% 0">Van Truck<br>02</div>
<div style="position:absolute;left:385.99px;top:11px;width:43px;height:43px;box-sizing:border-box;border:1px solid #a3b0b9;border-radius:3px;background:#d3d5d6"></div>
<svg style="position:absolute;left:385.99px;top:11px" width="43" height="43" viewBox="0 0 43 43"><path d="M15.5 9.2 L38.5 10.8 L38.5 24.2 L15.5 26.2 Z" fill="#d4661e"/><path d="M15.5 9.2 L38.5 10.8 L38.5 12 L15.5 10.5Z" fill="#fff" opacity="0.5"/><path d="M5 15 L9 12.5 L16 12.2 L16.5 29 L7 30 L4.5 25 Z" fill="#d86a22"/><path d="M5.6 15.6 L9.2 13.4 L11.5 13.4 L11.5 19.5 L5.5 19.8Z" fill="#3a2a22"/><path d="M12.6 13.6 L15.6 13.4 L15.8 19 L12.6 19.4Z" fill="#3a2a22"/><circle cx="10" cy="29.2" r="2.8" fill="#262626"/><circle cx="10" cy="29.2" r="1.54" fill="#8e9296"/><circle cx="33.5" cy="25.2" r="2.4" fill="#262626"/><circle cx="33.5" cy="25.2" r="1.32" fill="#8e9296"/><circle cx="36.8" cy="35.6" r="5.4" fill="#30363b"/><text x="36.8" y="38.3" text-anchor="middle" font-family="Liberation Sans" font-weight="bold" font-size="7.2" fill="#d8dadc">SI</text></svg>
<div style="position:absolute;left:377.99px;top:56.4px;width:59px;text-align:center;font-size:10.6px;line-height:12.6px;color:#67747e;white-space:nowrap;transform:scaleX(0.845);transform-origin:50% 0">Van Truck<br>01</div>
<div style="position:absolute;left:439.56px;top:11px;width:43px;height:43px;box-sizing:border-box;border:1px solid #a3b0b9;border-radius:3px;background:#d3d5d6"></div>
<svg style="position:absolute;left:439.56px;top:11px" width="43" height="43" viewBox="0 0 43 43"><path d="M3.5 23 L7 16 L13.5 11.5 L35.5 11 L39 13.5 L39.5 22 L37 25.5 L12 29.5 L5 28.5 L3.5 26 Z" fill="#e2e2e4"/><path d="M4 25 L12 27.5 L39 21.5 L37 25.5 L12 29.5 L5 28.5 L3.5 26 Z" fill="#a0a4a8" opacity="0.55"/><path d="M7.6 16.4 L13.4 12.4 L17 12.3 L14.8 18.4 Z" fill="#2a2e32"/><path d="M17.6 13 L35 12.3 L36.5 15.6 L16.2 17.6 Z" fill="#2a2e32" opacity="0.75"/><circle cx="13.5" cy="27.8" r="3" fill="#262626"/><circle cx="13.5" cy="27.8" r="1.65" fill="#8e9296"/><circle cx="34.5" cy="24.2" r="2.5" fill="#262626"/><circle cx="34.5" cy="24.2" r="1.38" fill="#8e9296"/><circle cx="36.8" cy="35.6" r="5.4" fill="#30363b"/><text x="36.8" y="38.3" text-anchor="middle" font-family="Liberation Sans" font-weight="bold" font-size="7.2" fill="#d8dadc">SI</text></svg>
<div style="position:absolute;left:431.56px;top:56.4px;width:59px;text-align:center;font-size:10.6px;line-height:12.6px;color:#67747e;white-space:nowrap;transform:scaleX(0.845);transform-origin:50% 0">Van 02</div>
<div style="position:absolute;left:493.13px;top:11px;width:43px;height:43px;box-sizing:border-box;border:1px solid #a3b0b9;border-radius:3px;background:#d3d5d6"></div>
<svg style="position:absolute;left:493.13px;top:11px" width="43" height="43" viewBox="0 0 43 43"><path d="M3.5 23 L7 16 L13.5 11.5 L35.5 11 L39 13.5 L39.5 22 L37 25.5 L12 29.5 L5 28.5 L3.5 26 Z" fill="#a8acb0"/><path d="M4 25 L12 27.5 L39 21.5 L37 25.5 L12 29.5 L5 28.5 L3.5 26 Z" fill="#6e7276" opacity="0.55"/><path d="M7.6 16.4 L13.4 12.4 L17 12.3 L14.8 18.4 Z" fill="#2e3236"/><path d="M17.6 13 L35 12.3 L36.5 15.6 L16.2 17.6 Z" fill="#2e3236" opacity="0.75"/><circle cx="13.5" cy="27.8" r="3" fill="#262626"/><circle cx="13.5" cy="27.8" r="1.65" fill="#8e9296"/><circle cx="34.5" cy="24.2" r="2.5" fill="#262626"/><circle cx="34.5" cy="24.2" r="1.38" fill="#8e9296"/><circle cx="36.8" cy="35.6" r="5.4" fill="#30363b"/><text x="36.8" y="38.3" text-anchor="middle" font-family="Liberation Sans" font-weight="bold" font-size="7.2" fill="#d8dadc">SI</text></svg>
<div style="position:absolute;left:485.13px;top:56.4px;width:59px;text-align:center;font-size:10.6px;line-height:12.6px;color:#67747e;white-space:nowrap;transform:scaleX(0.845);transform-origin:50% 0">Van 01</div>
<div style="position:absolute;left:546.70px;top:11px;width:43px;height:43px;box-sizing:border-box;border:1px solid #a3b0b9;border-radius:3px;background:#d3d5d6"></div>
<svg style="position:absolute;left:546.70px;top:11px" width="43" height="43" viewBox="0 0 43 43"><path d="M15.5 9.2 L38.5 10.8 L38.5 24.2 L15.5 26.2 Z" fill="#bca58a"/><path d="M15.5 9.2 L38.5 10.8 L38.5 12 L15.5 10.5Z" fill="#fff" opacity="0.5"/><path d="M5 15 L9 12.5 L16 12.2 L16.5 29 L7 30 L4.5 25 Z" fill="#efc24e"/><path d="M5.6 15.6 L9.2 13.4 L11.5 13.4 L11.5 19.5 L5.5 19.8Z" fill="#2a2e32"/><path d="M12.6 13.6 L15.6 13.4 L15.8 19 L12.6 19.4Z" fill="#2a2e32"/><circle cx="10" cy="29.2" r="2.8" fill="#262626"/><circle cx="10" cy="29.2" r="1.54" fill="#8e9296"/><circle cx="33.5" cy="25.2" r="2.4" fill="#262626"/><circle cx="33.5" cy="25.2" r="1.32" fill="#8e9296"/><circle cx="36.8" cy="35.6" r="5.4" fill="#30363b"/><text x="36.8" y="38.3" text-anchor="middle" font-family="Liberation Sans" font-weight="bold" font-size="7.2" fill="#d8dadc">SI</text></svg>
<div style="position:absolute;left:538.70px;top:56.4px;width:59px;text-align:center;font-size:10.6px;line-height:12.6px;color:#67747e;white-space:nowrap;transform:scaleX(0.845);transform-origin:50% 0">TruckWith<br>Bamboo</div>
<div style="position:absolute;left:600.27px;top:11px;width:43px;height:43px;box-sizing:border-box;border:1px solid #a3b0b9;border-radius:3px;background:#d3d5d6"></div>
<svg style="position:absolute;left:600.27px;top:11px" width="43" height="43" viewBox="0 0 43 43"><path d="M13.5 12 L38.5 14 L38.5 22.8 L13.5 25.5 Z" fill="#3a5a9a"/><path d="M13.5 21 L38.5 19.5 L38.5 22.8 L13.5 25.5Z" fill="#2a3a6a" opacity="0.6"/><path d="M4.5 13.2 L14.5 12.2 L15.5 28.5 L5 29 L4 24 Z" fill="#a8282a"/><path d="M5 14 L14 13.2 L14 18 L5 18.6Z" fill="#222"/><circle cx="10" cy="28.5" r="2.5" fill="#262626"/><circle cx="10" cy="28.5" r="1.38" fill="#8e9296"/><circle cx="27" cy="25.6" r="2.2" fill="#262626"/><circle cx="27" cy="25.6" r="1.21" fill="#8e9296"/><circle cx="33" cy="24.8" r="2.2" fill="#262626"/><circle cx="33" cy="24.8" r="1.21" fill="#8e9296"/><circle cx="36.8" cy="35.6" r="5.4" fill="#30363b"/><text x="36.8" y="38.3" text-anchor="middle" font-family="Liberation Sans" font-weight="bold" font-size="7.2" fill="#d8dadc">SI</text></svg>
<div style="position:absolute;left:592.27px;top:56.4px;width:59px;text-align:center;font-size:10.6px;line-height:12.6px;color:#67747e;white-space:nowrap;transform:scaleX(0.845);transform-origin:50% 0">Truck 04</div>
<div style="position:absolute;left:653.84px;top:11px;width:43px;height:43px;box-sizing:border-box;border:1px solid #a3b0b9;border-radius:3px;background:#d3d5d6"></div>
<svg style="position:absolute;left:653.84px;top:11px" width="43" height="43" viewBox="0 0 43 43"><path d="M13.5 12 L38.5 14 L38.5 22.8 L13.5 25.5 Z" fill="#e6e6e8"/><path d="M13.5 21 L38.5 19.5 L38.5 22.8 L13.5 25.5Z" fill="#9a9a9c" opacity="0.6"/><path d="M4.5 13.2 L14.5 12.2 L15.5 28.5 L5 29 L4 24 Z" fill="#1e2e5a"/><path d="M5 14 L14 13.2 L14 18 L5 18.6Z" fill="#1a1a1a"/><circle cx="10" cy="28.5" r="2.5" fill="#262626"/><circle cx="10" cy="28.5" r="1.38" fill="#8e9296"/><circle cx="27" cy="25.6" r="2.2" fill="#262626"/><circle cx="27" cy="25.6" r="1.21" fill="#8e9296"/><circle cx="33" cy="24.8" r="2.2" fill="#262626"/><circle cx="33" cy="24.8" r="1.21" fill="#8e9296"/><circle cx="36.8" cy="35.6" r="5.4" fill="#30363b"/><text x="36.8" y="38.3" text-anchor="middle" font-family="Liberation Sans" font-weight="bold" font-size="7.2" fill="#d8dadc">SI</text></svg>
<div style="position:absolute;left:645.84px;top:56.4px;width:59px;text-align:center;font-size:10.6px;line-height:12.6px;color:#67747e;white-space:nowrap;transform:scaleX(0.845);transform-origin:50% 0">Truck 03</div>
<div style="position:absolute;left:707.41px;top:11px;width:43px;height:43px;box-sizing:border-box;border:1px solid #a3b0b9;border-radius:3px;background:#d3d5d6"></div>
<svg style="position:absolute;left:707.41px;top:11px" width="43" height="43" viewBox="0 0 43 43"><path d="M10 6 L24 5.5 L25 8 L12 9 Z" fill="#e8c21a"/><path d="M10.5 8 L12 8.5 L11 24 L8.5 23Z" fill="#d4ae12"/><path d="M12 9 L22 8.5 L21 19 L12 21Z" fill="#50545a" opacity="0.7"/><path d="M9 20 L22 17 L38 13.5 L38.5 19 L24 23 L21 28 L11 30 L8.5 26Z" fill="#e6bd14"/><path d="M22 18 L38 14 L38.5 16 L23 20Z" fill="#c9a20e"/><circle cx="9.5" cy="29.5" r="2.7" fill="#262626"/><circle cx="9.5" cy="29.5" r="1.49" fill="#777"/><circle cx="33.5" cy="22.5" r="2.4" fill="#262626"/><circle cx="33.5" cy="22.5" r="1.32" fill="#777"/><circle cx="36.8" cy="35.6" r="5.4" fill="#30363b"/><text x="36.8" y="38.3" text-anchor="middle" font-family="Liberation Sans" font-weight="bold" font-size="7.2" fill="#d8dadc">SI</text></svg>
<div style="position:absolute;left:699.41px;top:56.4px;width:59px;text-align:center;font-size:10.6px;line-height:12.6px;color:#67747e;white-space:nowrap;transform:scaleX(0.845);transform-origin:50% 0">Tricycle<br>01</div>
<div style="position:absolute;left:760.98px;top:11px;width:43px;height:43px;box-sizing:border-box;border:1px solid #a3b0b9;border-radius:3px;background:#d3d5d6"></div>
<svg style="position:absolute;left:760.98px;top:11px" width="43" height="43" viewBox="0 0 43 43"><path d="M3.8 23 Q4.2 21 6.8 20.2 L12.8 18.2 L17.6 13 Q18.6 12.2 20.5 12.2 L29.5 12 Q31.5 12 33 13 L37.4 16.4 Q38.8 17.6 38.8 20 L38.6 23 Q38.2 24.8 36.6 25.2 L21 28.6 Q18 29.4 14 29.6 L7.5 29.2 Q4.4 28.6 3.9 26.6 Z" fill="#e8cc2a"/><path d="M4 24.8 L14 27.2 L38.7 21.6 L38.6 23 Q38.2 24.8 36.6 25.2 L21 28.6 Q18 29.4 14 29.6 L7.5 29.2 Q4.4 28.6 3.9 26.6Z" fill="#b09a10" opacity="0.75"/><path d="M13 18.4 L17.9 13.6 L22.2 13.4 L18.6 19.5 Z" fill="#23262a"/><path d="M19.8 19.4 L23.2 13.4 L30 13.2 L35.8 17.2 Z" fill="#23262a" opacity="0.85"/><path d="M4.6 21.8 L8.2 21 L7.8 22.2 L4.4 23Z" fill="#f4f4f4" opacity="0.8"/><circle cx="16.5" cy="28.3" r="3.3" fill="#262626"/><circle cx="16.5" cy="28.3" r="1.81" fill="#8e9296"/><circle cx="35.4" cy="24.4" r="2.8" fill="#262626"/><circle cx="35.4" cy="24.4" r="1.54" fill="#8e9296"/><circle cx="36.8" cy="35.6" r="5.4" fill="#30363b"/><text x="36.8" y="38.3" text-anchor="middle" font-family="Liberation Sans" font-weight="bold" font-size="7.2" fill="#d8dadc">SI</text></svg>
<div style="position:absolute;left:752.98px;top:56.4px;width:59px;text-align:center;font-size:10.6px;line-height:12.6px;color:#67747e;white-space:nowrap;transform:scaleX(0.845);transform-origin:50% 0">Suzuki<br>Alto</div>
<div style="position:absolute;left:11.00px;top:87px;width:43px;height:43px;box-sizing:border-box;border:1px solid #a3b0b9;border-radius:3px;background:#d3d5d6"></div>
<svg style="position:absolute;left:11.00px;top:87px" width="43" height="43" viewBox="0 0 43 43"><path d="M3.8 23 Q4.2 21 6.8 20.2 L12.8 18.2 L17.6 13 Q18.6 12.2 20.5 12.2 L29.5 12 Q31.5 12 33 13 L37.4 16.4 Q38.8 17.6 38.8 20 L38.6 23 Q38.2 24.8 36.6 25.2 L21 28.6 Q18 29.4 14 29.6 L7.5 29.2 Q4.4 28.6 3.9 26.6 Z" fill="#eccb1e"/><path d="M4 24.8 L14 27.2 L38.7 21.6 L38.6 23 Q38.2 24.8 36.6 25.2 L21 28.6 Q18 29.4 14 29.6 L7.5 29.2 Q4.4 28.6 3.9 26.6Z" fill="#b0940a" opacity="0.75"/><path d="M13 18.4 L17.9 13.6 L22.2 13.4 L18.6 19.5 Z" fill="#2a2c30"/><path d="M19.8 19.4 L23.2 13.4 L30 13.2 L35.8 17.2 Z" fill="#2a2c30" opacity="0.85"/><path d="M4.6 21.8 L8.2 21 L7.8 22.2 L4.4 23Z" fill="#f4f4f4" opacity="0.8"/><circle cx="16.5" cy="28.3" r="3.3" fill="#262626"/><circle cx="16.5" cy="28.3" r="1.81" fill="#8e9296"/><circle cx="35.4" cy="24.4" r="2.8" fill="#262626"/><circle cx="35.4" cy="24.4" r="1.54" fill="#8e9296"/><circle cx="36.8" cy="35.6" r="5.4" fill="#30363b"/><text x="36.8" y="38.3" text-anchor="middle" font-family="Liberation Sans" font-weight="bold" font-size="7.2" fill="#d8dadc">SI</text></svg>
<div style="position:absolute;left:3.00px;top:132.4px;width:59px;text-align:center;font-size:10.6px;line-height:12.6px;color:#67747e;white-space:nowrap;transform:scaleX(0.845);transform-origin:50% 0">Renault</div>
<div style="position:absolute;left:64.57px;top:87px;width:43px;height:43px;box-sizing:border-box;border:1px solid #a3b0b9;border-radius:3px;background:#d3d5d6"></div>
<svg style="position:absolute;left:64.57px;top:87px" width="43" height="43" viewBox="0 0 43 43"><path d="M3.5 22.5 Q4 20.5 6.5 19.8 L12.5 18 L18 13.6 Q19 13 21 13 L31.5 13 Q33 13 34.5 14 L38.6 17.5 Q39.5 18.5 39.4 20.5 L39 23 Q38.5 24.6 37 25 L21 28.4 Q18 29.2 14 29.5 L7 29 Q4 28.5 3.6 26.5 Z" fill="#3a4a3e"/><path d="M3.8 24.5 L14 27 L39.2 21.5 L39 23 Q38.5 24.6 37 25 L21 28.4 Q18 29.2 14 29.5 L7 29 Q4 28.5 3.6 26.5Z" fill="#1e2a22" opacity="0.75"/><path d="M12.8 18.3 L18.4 14 L22.6 14 L18.6 19.5 Z" fill="#1e2420"/><path d="M19.8 19.4 L23.6 14.1 L31.2 14.1 L36.8 17.7 Z" fill="#1e2420" opacity="0.85"/><path d="M4.4 21.6 L8 20.8 L7.6 22 L4.2 22.8Z" fill="#f4f4f4" opacity="0.8"/><circle cx="16.5" cy="28.2" r="3.3" fill="#262626"/><circle cx="16.5" cy="28.2" r="1.81" fill="#8e9296"/><circle cx="35.8" cy="24.2" r="2.8" fill="#262626"/><circle cx="35.8" cy="24.2" r="1.54" fill="#8e9296"/><circle cx="36.8" cy="35.6" r="5.4" fill="#30363b"/><text x="36.8" y="38.3" text-anchor="middle" font-family="Liberation Sans" font-weight="bold" font-size="7.2" fill="#d8dadc">SI</text></svg>
<div style="position:absolute;left:56.57px;top:132.4px;width:59px;text-align:center;font-size:10.6px;line-height:12.6px;color:#67747e;white-space:nowrap;transform:scaleX(0.845);transform-origin:50% 0">Ranger</div>
<div style="position:absolute;left:118.14px;top:87px;width:43px;height:43px;box-sizing:border-box;border:1px solid #a3b0b9;border-radius:3px;background:#d3d5d6"></div>
<svg style="position:absolute;left:118.14px;top:87px" width="43" height="43" viewBox="0 0 43 43"><path d="M3.5 22.5 Q4 20.5 6.5 19.8 L12.5 18 L18 13.6 Q19 13 21 13 L31.5 13 Q33 13 34.5 14 L38.6 17.5 Q39.5 18.5 39.4 20.5 L39 23 Q38.5 24.6 37 25 L21 28.4 Q18 29.2 14 29.5 L7 29 Q4 28.5 3.6 26.5 Z" fill="#2a56a2"/><path d="M3.8 24.5 L14 27 L39.2 21.5 L39 23 Q38.5 24.6 37 25 L21 28.4 Q18 29.2 14 29.5 L7 29 Q4 28.5 3.6 26.5Z" fill="#183a70" opacity="0.75"/><path d="M12.8 18.3 L18.4 14 L22.6 14 L18.6 19.5 Z" fill="#14243a"/><path d="M19.8 19.4 L23.6 14.1 L31.2 14.1 L36.8 17.7 Z" fill="#14243a" opacity="0.85"/><path d="M4.4 21.6 L8 20.8 L7.6 22 L4.2 22.8Z" fill="#f4f4f4" opacity="0.8"/><circle cx="16.5" cy="28.2" r="3.3" fill="#262626"/><circle cx="16.5" cy="28.2" r="1.81" fill="#8e9296"/><circle cx="35.8" cy="24.2" r="2.8" fill="#262626"/><circle cx="35.8" cy="24.2" r="1.54" fill="#8e9296"/><circle cx="36.8" cy="35.6" r="5.4" fill="#30363b"/><text x="36.8" y="38.3" text-anchor="middle" font-family="Liberation Sans" font-weight="bold" font-size="7.2" fill="#d8dadc">SI</text></svg>
<div style="position:absolute;left:110.14px;top:132.4px;width:59px;text-align:center;font-size:10.6px;line-height:12.6px;color:#67747e;white-space:nowrap;transform:scaleX(0.845);transform-origin:50% 0">Porsche</div>
<div style="position:absolute;left:171.71px;top:87px;width:43px;height:43px;box-sizing:border-box;border:1px solid #a3b0b9;border-radius:3px;background:#d3d5d6"></div>
<svg style="position:absolute;left:171.71px;top:87px" width="43" height="43" viewBox="0 0 43 43"><path d="M3.8 23 Q4.2 21 6.8 20.2 L12.8 18.2 L17.6 13 Q18.6 12.2 20.5 12.2 L29.5 12 Q31.5 12 33 13 L37.4 16.4 Q38.8 17.6 38.8 20 L38.6 23 Q38.2 24.8 36.6 25.2 L21 28.6 Q18 29.4 14 29.6 L7.5 29.2 Q4.4 28.6 3.9 26.6 Z" fill="#aeb6c0"/><path d="M4 24.8 L14 27.2 L38.7 21.6 L38.6 23 Q38.2 24.8 36.6 25.2 L21 28.6 Q18 29.4 14 29.6 L7.5 29.2 Q4.4 28.6 3.9 26.6Z" fill="#7a8290" opacity="0.75"/><path d="M13 18.4 L17.9 13.6 L22.2 13.4 L18.6 19.5 Z" fill="#3a4048"/><path d="M19.8 19.4 L23.2 13.4 L30 13.2 L35.8 17.2 Z" fill="#3a4048" opacity="0.85"/><path d="M4.6 21.8 L8.2 21 L7.8 22.2 L4.4 23Z" fill="#f4f4f4" opacity="0.8"/><circle cx="16.5" cy="28.3" r="3.3" fill="#262626"/><circle cx="16.5" cy="28.3" r="1.81" fill="#8e9296"/><circle cx="35.4" cy="24.4" r="2.8" fill="#262626"/><circle cx="35.4" cy="24.4" r="1.54" fill="#8e9296"/><circle cx="36.8" cy="35.6" r="5.4" fill="#30363b"/><text x="36.8" y="38.3" text-anchor="middle" font-family="Liberation Sans" font-weight="bold" font-size="7.2" fill="#d8dadc">SI</text></svg>
<div style="position:absolute;left:163.71px;top:132.4px;width:59px;text-align:center;font-size:10.6px;line-height:12.6px;color:#67747e;white-space:nowrap;transform:scaleX(0.845);transform-origin:50% 0">Opel</div>
<div style="position:absolute;left:225.28px;top:87px;width:43px;height:43px;box-sizing:border-box;border:1px solid #a3b0b9;border-radius:3px;background:#d3d5d6"></div>
<svg style="position:absolute;left:225.28px;top:87px" width="43" height="43" viewBox="0 0 43 43"><path d="M3 25 L6 19 L18 10.5 L30 7 L38 9.5 L39 15 L35 22 L20 30 L11 32 L5 30Z" fill="#b8b2ac"/><path d="M15 16 L22 10.5 L29 9 L28 14 L20 18Z" fill="#8a8480"/><path d="M4 28 L11 30.5 L20 28 L38 14 L35 22 L20 30 L11 32 L5 30Z" fill="#8e8884" opacity="0.6"/><path d="M3.2 25.5 L5 26 L4.5 27.2Z" fill="#c03a2a"/><circle cx="36.8" cy="35.6" r="5.4" fill="#30363b"/><text x="36.8" y="38.3" text-anchor="middle" font-family="Liberation Sans" font-weight="bold" font-size="7.2" fill="#d8dadc">SI</text></svg>
<div style="position:absolute;left:217.28px;top:132.4px;width:59px;text-align:center;font-size:10.6px;line-height:12.6px;color:#67747e;white-space:nowrap;transform:scaleX(0.845);transform-origin:50% 0">Norm_轿</div>
<div style="position:absolute;left:278.85px;top:87px;width:43px;height:43px;box-sizing:border-box;border:1px solid #a3b0b9;border-radius:3px;background:#d3d5d6"></div>
<svg style="position:absolute;left:278.85px;top:87px" width="43" height="43" viewBox="0 0 43 43"><path d="M16 15 L38.5 11 L39 18 L17 23Z" fill="#e8a818"/><path d="M17 23 L39 18 L38 21 L18 26Z" fill="#b07a10"/><path d="M4 12.5 L16 11.5 L17 28 L6 29.5 L4 24Z" fill="#f0b21a"/><path d="M5 13.5 L13 12.8 L13 19.5 L5 20Z" fill="#2a3a4a"/><circle cx="10" cy="29.2" r="2.8" fill="#262626"/><circle cx="10" cy="29.2" r="1.54" fill="#8e9296"/><circle cx="30" cy="25" r="2.6" fill="#262626"/><circle cx="30" cy="25" r="1.43" fill="#8e9296"/><circle cx="35" cy="23.8" r="2.4" fill="#262626"/><circle cx="35" cy="23.8" r="1.32" fill="#8e9296"/><circle cx="36.8" cy="35.6" r="5.4" fill="#30363b"/><text x="36.8" y="38.3" text-anchor="middle" font-family="Liberation Sans" font-weight="bold" font-size="7.2" fill="#d8dadc">SI</text></svg>
<div style="position:absolute;left:270.85px;top:132.4px;width:59px;text-align:center;font-size:10.6px;line-height:12.6px;color:#67747e;white-space:nowrap;transform:scaleX(0.845);transform-origin:50% 0">Norm_货</div>
<div style="position:absolute;left:332.42px;top:87px;width:43px;height:43px;box-sizing:border-box;border:1px solid #a3b0b9;border-radius:3px;background:#d3d5d6"></div>
<svg style="position:absolute;left:332.42px;top:87px" width="43" height="43" viewBox="0 0 43 43"><path d="M3 24 L5.5 18.5 L13 16.5 L18 11.5 L26 11 L28 14 L38 12 L39.5 16 L38 22 L22 28.5 L11 31 L5 30 L3 27Z" fill="#c8402c"/><path d="M13.5 17 L18.2 12.3 L25.5 12 L27 15 L19 18.5 Z" fill="#2a2f36"/><path d="M4 27 L11 29.5 L38 21 L38 22 L22 28.5 L11 31 L5 30Z" fill="#7a2218" opacity="0.7"/><circle cx="13" cy="30" r="3" fill="#262626"/><circle cx="13" cy="30" r="1.65" fill="#8e9296"/><circle cx="33" cy="23.5" r="2.5" fill="#262626"/><circle cx="33" cy="23.5" r="1.38" fill="#8e9296"/><circle cx="36.8" cy="35.6" r="5.4" fill="#30363b"/><text x="36.8" y="38.3" text-anchor="middle" font-family="Liberation Sans" font-weight="bold" font-size="7.2" fill="#d8dadc">SI</text></svg>
<div style="position:absolute;left:324.42px;top:132.4px;width:59px;text-align:center;font-size:10.6px;line-height:12.6px;color:#67747e;white-space:nowrap;transform:scaleX(0.845);transform-origin:50% 0">Norm_皮</div>
<div style="position:absolute;left:385.99px;top:87px;width:43px;height:43px;box-sizing:border-box;border:1px solid #a3b0b9;border-radius:3px;background:#d3d5d6"></div>
<svg style="position:absolute;left:385.99px;top:87px" width="43" height="43" viewBox="0 0 43 43"><path d="M8 18 L18 15 L30 17 L39 13.5 L40 18 L31 23 L16 25.5 L8 23Z" fill="#6e5034"/><circle cx="9.5" cy="23.5" r="4.6" fill="#161616"/><circle cx="9.5" cy="23.5" r="2.53" fill="#444"/><circle cx="16" cy="31" r="5" fill="#161616"/><circle cx="16" cy="31" r="2.75" fill="#444"/><circle cx="35.5" cy="22.5" r="4.3" fill="#161616"/><circle cx="35.5" cy="22.5" r="2.37" fill="#444"/><circle cx="37" cy="16" r="3.4" fill="#161616"/><circle cx="37" cy="16" r="1.87" fill="#444"/><path d="M20 15 L21 7 L24.5 5 L27 7.5 L26.5 16Z" fill="#d0d4d6"/><circle cx="24" cy="4" r="2" fill="#3a302a"/><path d="M21 16 L27 16 L26 23 L22 23Z" fill="#5e584c"/><path d="M12 17 L19 13 L22 14" stroke="#222" stroke-width="1" fill="none"/><circle cx="36.8" cy="35.6" r="5.4" fill="#30363b"/><text x="36.8" y="38.3" text-anchor="middle" font-family="Liberation Sans" font-weight="bold" font-size="7.2" fill="#d8dadc">SI</text></svg>
<div style="position:absolute;left:377.99px;top:132.4px;width:59px;text-align:center;font-size:10.6px;line-height:12.6px;color:#67747e;white-space:nowrap;transform:scaleX(0.845);transform-origin:50% 0">Norm_四</div>
<div style="position:absolute;left:439.56px;top:87px;width:43px;height:43px;box-sizing:border-box;border:1px solid #a3b0b9;border-radius:3px;background:#d3d5d6"></div>
<svg style="position:absolute;left:439.56px;top:87px" width="43" height="43" viewBox="0 0 43 43"><path d="M3.5 22.5 Q4 20.5 6.5 19.8 L12.5 18 L18 13.6 Q19 13 21 13 L31.5 13 Q33 13 34.5 14 L38.6 17.5 Q39.5 18.5 39.4 20.5 L39 23 Q38.5 24.6 37 25 L21 28.4 Q18 29.2 14 29.5 L7 29 Q4 28.5 3.6 26.5 Z" fill="#3a4256"/><path d="M3.8 24.5 L14 27 L39.2 21.5 L39 23 Q38.5 24.6 37 25 L21 28.4 Q18 29.2 14 29.5 L7 29 Q4 28.5 3.6 26.5Z" fill="#242a38" opacity="0.75"/><path d="M12.8 18.3 L18.4 14 L22.6 14 L18.6 19.5 Z" fill="#1a1e28"/><path d="M19.8 19.4 L23.6 14.1 L31.2 14.1 L36.8 17.7 Z" fill="#1a1e28" opacity="0.85"/><path d="M4.4 21.6 L8 20.8 L7.6 22 L4.2 22.8Z" fill="#f4f4f4" opacity="0.8"/><circle cx="16.5" cy="28.2" r="3.3" fill="#262626"/><circle cx="16.5" cy="28.2" r="1.81" fill="#8e9296"/><circle cx="35.8" cy="24.2" r="2.8" fill="#262626"/><circle cx="35.8" cy="24.2" r="1.54" fill="#8e9296"/><circle cx="36.8" cy="35.6" r="5.4" fill="#30363b"/><text x="36.8" y="38.3" text-anchor="middle" font-family="Liberation Sans" font-weight="bold" font-size="7.2" fill="#d8dadc">SI</text></svg>
<div style="position:absolute;left:431.56px;top:132.4px;width:59px;text-align:center;font-size:10.6px;line-height:12.6px;color:#67747e;white-space:nowrap;transform:scaleX(0.845);transform-origin:50% 0">Nissan</div>
<div style="position:absolute;left:493.13px;top:87px;width:43px;height:43px;box-sizing:border-box;border:1px solid #a3b0b9;border-radius:3px;background:#d3d5d6"></div>
<svg style="position:absolute;left:493.13px;top:87px" width="43" height="43" viewBox="0 0 43 43"><path d="M3.5 23 L7 16 L13.5 11.5 L35.5 11 L39 13.5 L39.5 22 L37 25.5 L12 29.5 L5 28.5 L3.5 26 Z" fill="#eaeaea"/><path d="M4 25 L12 27.5 L39 21.5 L37 25.5 L12 29.5 L5 28.5 L3.5 26 Z" fill="#9a9ea2" opacity="0.55"/><path d="M7.6 16.4 L13.4 12.4 L17 12.3 L14.8 18.4 Z" fill="#2c3034"/><path d="M17.6 13 L35 12.3 L36.5 15.6 L16.2 17.6 Z" fill="#2c3034" opacity="0.75"/><circle cx="13.5" cy="27.8" r="3" fill="#262626"/><circle cx="13.5" cy="27.8" r="1.65" fill="#8e9296"/><circle cx="34.5" cy="24.2" r="2.5" fill="#262626"/><circle cx="34.5" cy="24.2" r="1.38" fill="#8e9296"/><circle cx="36.8" cy="35.6" r="5.4" fill="#30363b"/><text x="36.8" y="38.3" text-anchor="middle" font-family="Liberation Sans" font-weight="bold" font-size="7.2" fill="#d8dadc">SI</text></svg>
<div style="position:absolute;left:485.13px;top:132.4px;width:59px;text-align:center;font-size:10.6px;line-height:12.6px;color:#67747e;white-space:nowrap;transform:scaleX(0.845);transform-origin:50% 0">MPV 02</div>
<div style="position:absolute;left:546.70px;top:87px;width:43px;height:43px;box-sizing:border-box;border:1px solid #a3b0b9;border-radius:3px;background:#d3d5d6"></div>
<svg style="position:absolute;left:546.70px;top:87px" width="43" height="43" viewBox="0 0 43 43"><path d="M3.5 23 L7 16 L13.5 11.5 L35.5 11 L39 13.5 L39.5 22 L37 25.5 L12 29.5 L5 28.5 L3.5 26 Z" fill="#f0f0f2"/><path d="M4 25 L12 27.5 L39 21.5 L37 25.5 L12 29.5 L5 28.5 L3.5 26 Z" fill="#a8acb0" opacity="0.55"/><path d="M7.6 16.4 L13.4 12.4 L17 12.3 L14.8 18.4 Z" fill="#2a2e32"/><path d="M17.6 13 L35 12.3 L36.5 15.6 L16.2 17.6 Z" fill="#2a2e32" opacity="0.75"/><circle cx="13.5" cy="27.8" r="3" fill="#262626"/><circle cx="13.5" cy="27.8" r="1.65" fill="#8e9296"/><circle cx="34.5" cy="24.2" r="2.5" fill="#262626"/><circle cx="34.5" cy="24.2" r="1.38" fill="#8e9296"/><circle cx="36.8" cy="35.6" r="5.4" fill="#30363b"/><text x="36.8" y="38.3" text-anchor="middle" font-family="Liberation Sans" font-weight="bold" font-size="7.2" fill="#d8dadc">SI</text></svg>
<div style="position:absolute;left:538.70px;top:132.4px;width:59px;text-align:center;font-size:10.6px;line-height:12.6px;color:#67747e;white-space:nowrap;transform:scaleX(0.845);transform-origin:50% 0">MPV 01</div>
<div style="position:absolute;left:600.27px;top:87px;width:43px;height:43px;box-sizing:border-box;border:1px solid #a3b0b9;border-radius:3px;background:#d3d5d6"></div>
<svg style="position:absolute;left:600.27px;top:87px" width="43" height="43" viewBox="0 0 43 43"><circle cx="9" cy="29" r="4.5" fill="#1e1e1e"/><circle cx="9" cy="29" r="2.48" fill="#b8bec4"/><circle cx="33.5" cy="26" r="3.6" fill="#1e1e1e"/><circle cx="33.5" cy="26" r="1.98" fill="#a8aeb4"/><path d="M9 28 L15 20 L24 21 L33 20 L36 23 L30 27 L18 28 Z" fill="#6a8ec8"/><path d="M23 22 L24 14 L27 10.5 L31 11 L32 17 L30 21Z" fill="#2a3a3a"/><circle cx="28.5" cy="8.3" r="2.2" fill="#2a2220"/><path d="M24 21 L31 20 L30.5 27 L28 27 L27.5 23 L24 23Z" fill="#3a4a60"/><path d="M13 19 L25 14" stroke="#333" stroke-width="0.8"/><circle cx="36.8" cy="35.6" r="5.4" fill="#30363b"/><text x="36.8" y="38.3" text-anchor="middle" font-family="Liberation Sans" font-weight="bold" font-size="7.2" fill="#d8dadc">SI</text></svg>
<div style="position:absolute;left:592.27px;top:132.4px;width:59px;text-align:center;font-size:10.6px;line-height:12.6px;color:#67747e;white-space:nowrap;transform:scaleX(0.845);transform-origin:50% 0">Motorcycl</div>
<div style="position:absolute;left:653.84px;top:87px;width:43px;height:43px;box-sizing:border-box;border:1px solid #a3b0b9;border-radius:3px;background:#d3d5d6"></div>
<svg style="position:absolute;left:653.84px;top:87px" width="43" height="43" viewBox="0 0 43 43"><circle cx="9" cy="29" r="4.5" fill="#1e1e1e"/><circle cx="9" cy="29" r="2.48" fill="#b8bec4"/><circle cx="33.5" cy="26" r="3.6" fill="#1e1e1e"/><circle cx="33.5" cy="26" r="1.98" fill="#a8aeb4"/><path d="M9 28 L15 20 L24 21 L33 20 L36 23 L30 27 L18 28 Z" fill="#8aa6c0"/><path d="M23 22 L24 14 L27 10.5 L31 11 L32 17 L30 21Z" fill="#2a4a6a"/><circle cx="28.5" cy="8.3" r="2.2" fill="#c8a060"/><path d="M24 21 L31 20 L30.5 27 L28 27 L27.5 23 L24 23Z" fill="#7a8a5a"/><path d="M13 19 L25 14" stroke="#333" stroke-width="0.8"/><circle cx="36.8" cy="35.6" r="5.4" fill="#30363b"/><text x="36.8" y="38.3" text-anchor="middle" font-family="Liberation Sans" font-weight="bold" font-size="7.2" fill="#d8dadc">SI</text></svg>
<div style="position:absolute;left:645.84px;top:132.4px;width:59px;text-align:center;font-size:10.6px;line-height:12.6px;color:#67747e;white-space:nowrap;transform:scaleX(0.845);transform-origin:50% 0">Motorcycl</div>
<div style="position:absolute;left:707.41px;top:87px;width:43px;height:43px;box-sizing:border-box;border:1px solid #a3b0b9;border-radius:3px;background:#d3d5d6"></div>
<svg style="position:absolute;left:707.41px;top:87px" width="43" height="43" viewBox="0 0 43 43"><circle cx="9" cy="29" r="4.5" fill="#1e1e1e"/><circle cx="9" cy="29" r="2.48" fill="#b8bec4"/><circle cx="33.5" cy="26" r="3.6" fill="#1e1e1e"/><circle cx="33.5" cy="26" r="1.98" fill="#a8aeb4"/><path d="M9 28 L15 20 L24 21 L33 20 L36 23 L30 27 L18 28 Z" fill="#b8202a"/><path d="M23 22 L24 14 L27 10.5 L31 11 L32 17 L30 21Z" fill="#c8ccc8"/><circle cx="28.5" cy="8.3" r="2.2" fill="#222"/><path d="M24 21 L31 20 L30.5 27 L28 27 L27.5 23 L24 23Z" fill="#3a4a6a"/><path d="M13 19 L25 14" stroke="#333" stroke-width="0.8"/><circle cx="36.8" cy="35.6" r="5.4" fill="#30363b"/><text x="36.8" y="38.3" text-anchor="middle" font-family="Liberation Sans" font-weight="bold" font-size="7.2" fill="#d8dadc">SI</text></svg>
<div style="position:absolute;left:699.41px;top:132.4px;width:59px;text-align:center;font-size:10.6px;line-height:12.6px;color:#67747e;white-space:nowrap;transform:scaleX(0.845);transform-origin:50% 0">Motorcycl</div>
<div style="position:absolute;left:760.98px;top:87px;width:43px;height:43px;box-sizing:border-box;border:1px solid #a3b0b9;border-radius:3px;background:#d3d5d6"></div>
<svg style="position:absolute;left:760.98px;top:87px" width="43" height="43" viewBox="0 0 43 43"><path d="M3.5 14 L9 10 L39 11 L39.5 21 L9 25.5 L4 24 Z" fill="#f2f2f2"/><path d="M4 14.5 L9 11.5 L9 18 L4 18.6Z" fill="#1c1c1c"/><path d="M10 13 L38.5 12.5 L38.5 15.2 L10 16.5Z" fill="#1a1a1a"/><path d="M10 19 L38.5 16.8 L38.5 18 L10 20.5Z" fill="#555"/><circle cx="9" cy="25" r="2.2" fill="#262626"/><circle cx="9" cy="25" r="1.21" fill="#8e9296"/><circle cx="31" cy="22" r="2" fill="#262626"/><circle cx="31" cy="22" r="1.10" fill="#8e9296"/><circle cx="36.8" cy="35.6" r="5.4" fill="#30363b"/><text x="36.8" y="38.3" text-anchor="middle" font-family="Liberation Sans" font-weight="bold" font-size="7.2" fill="#d8dadc">SI</text></svg>
<div style="position:absolute;left:752.98px;top:132.4px;width:59px;text-align:center;font-size:10.6px;line-height:12.6px;color:#67747e;white-space:nowrap;transform:scaleX(0.845);transform-origin:50% 0">Motor</div>
</div>
<div style="position:absolute;left:1003px;top:452.5px;width:3.7px;height:134px;background:#f0f0f0"></div>
<div style="position:absolute;left:1003px;top:452.5px;width:3.7px;height:77px;background:#c6c8ca;border-radius:2px"></div>
<div style="position:absolute;left:491.2px;top:588.8px;width:21.8px;height:21.8px;background:#d9d9d9;border-radius:50%"></div>
<div class="t" style="left:491.2px;top:593.5px;width:21.8px;text-align:center;font-size:10px;color:#56616b">1</div>
<div class="t" style="left:516.9px;top:593.5px;width:21.8px;text-align:center;font-size:10px;color:#56616b">2</div>
<div class="t" style="left:542.1999999999999px;top:593.5px;width:21.8px;text-align:center;font-size:10px;color:#56616b">3</div>
<div class="t" style="left:567.5px;top:593.5px;width:21.8px;text-align:center;font-size:10px;color:#56616b">4</div>
<div class="t" style="left:592.8px;top:593.5px;width:21.8px;text-align:center;font-size:10px;color:#56616b">5</div>
<svg style="position:absolute;left:446px;top:595px" width="220" height="11" viewBox="0 0 220 11">
<path d="M1.5 1.5 V9" stroke="#c2c6ca" stroke-width="1"/><path d="M8.5 1.8 L4.6 5.3 L8.5 8.8" fill="none" stroke="#c2c6ca" stroke-width="1"/>
<path d="M32.5 1.8 L28.6 5.3 L32.5 8.8" fill="none" stroke="#c2c6ca" stroke-width="1"/>
<path d="M181.5 1.8 L185.4 5.3 L181.5 8.8" fill="none" stroke="#444" stroke-width="1.1"/>
<path d="M205 1.8 L208.9 5.3 L205 8.8" fill="none" stroke="#444" stroke-width="1.1"/><path d="M212 1.5 V9" stroke="#444" stroke-width="1.1"/></svg>
<div class="t" style="left:679.70px;top:594.5px;color:#55616b;font-size:9px;font-weight:normal;letter-spacing:-0.2px;-webkit-text-stroke:0.12px #55616b;">跳转至</div>
<div style="position:absolute;left:714.4px;top:591.4px;width:33px;height:17px;border:1px solid #dfe1e3;border-radius:3px;box-sizing:border-box"></div>
<div class="t" style="left:721px;top:594.5px;font-size:10px;color:#56616b">1</div>
<div class="t" style="left:750.80px;top:594.5px;color:#55616b;font-size:9px;font-weight:normal;letter-spacing:-0.2px;-webkit-text-stroke:0.12px #55616b;">页</div>
</body></html>
